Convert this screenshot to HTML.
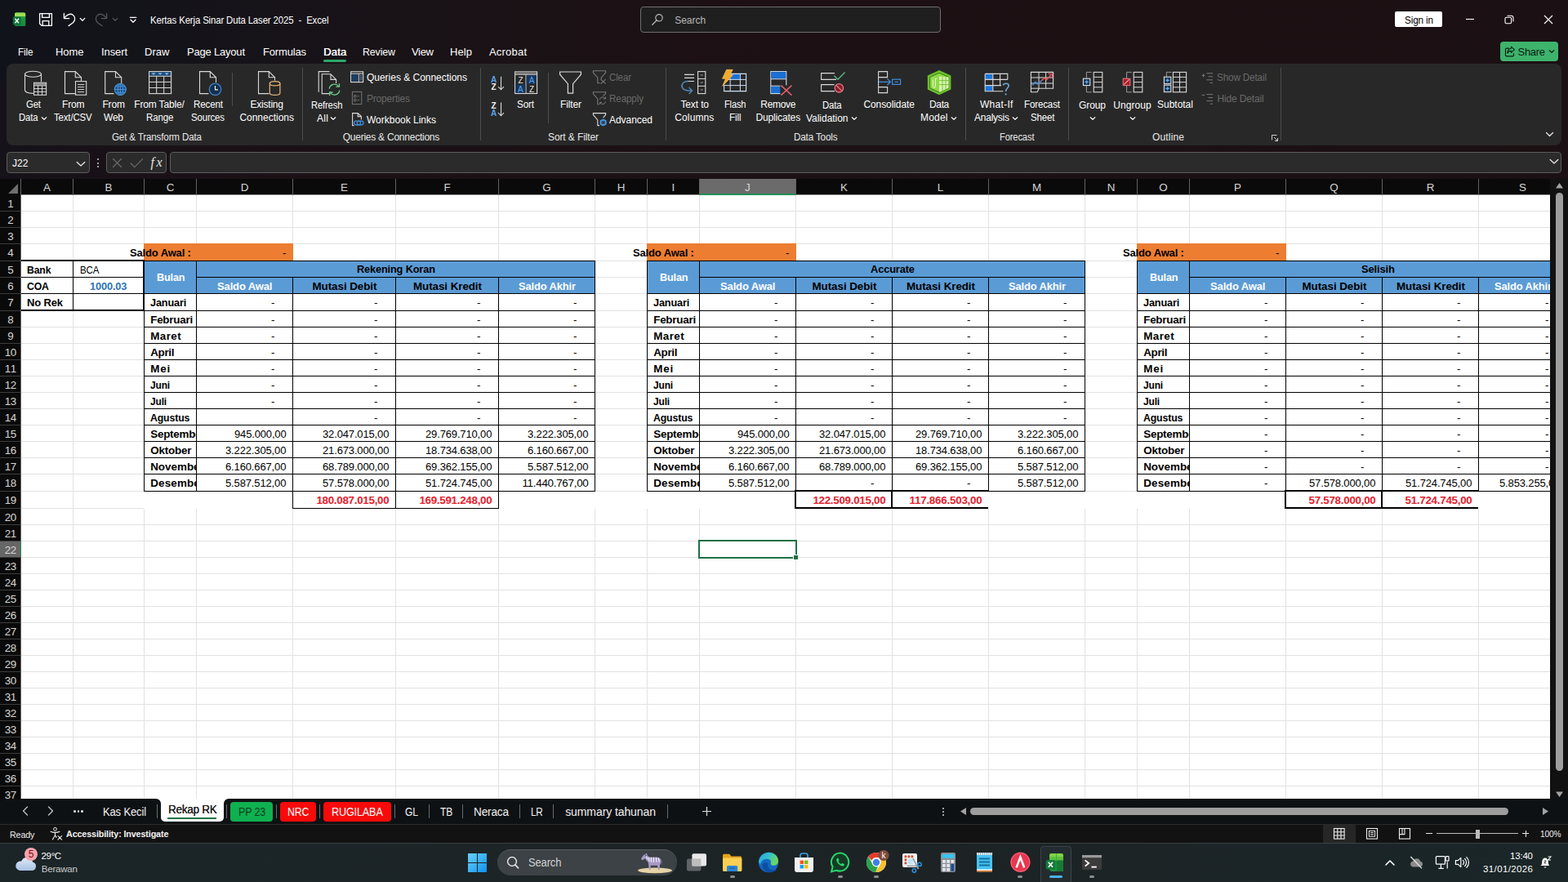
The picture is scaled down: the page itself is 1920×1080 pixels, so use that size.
<!DOCTYPE html>
<html lang="id"><head><meta charset="utf-8"><title>Kertas Kerja Sinar Duta Laser 2025 - Excel</title>
<style>
*{box-sizing:border-box;margin:0;padding:0}
html,body{width:1920px;height:1080px;overflow:hidden}
body{position:relative;font-family:"Liberation Sans",sans-serif;background:#1b1114;color:#fff}
div,span,svg{position:absolute}
.t{white-space:pre}
</style></head>
<body>
<div style="left:0px;top:0px;width:1920px;height:219px;background:#1b1115;"></div>
<div style="left:0px;top:0px;width:1920px;height:120px;background:linear-gradient(90deg,#11131a 0,#14131a 10%,#1a1216 30%,#1d1014 50%,#1b1013 100%);"></div>
<div style="left:0px;top:100px;width:1920px;height:119px;background:linear-gradient(90deg,#151219 0,#1a1116 12%,#1c1115 40%,#1b1013 100%);"></div>
<svg style="left:15px;top:15px;" width="18" height="18" viewBox="0 0 18 18" fill="none">
<defs><linearGradient id="xg" x1="0" y1="0" x2="0" y2="1"><stop offset="0" stop-color="#35b04a"/><stop offset="1" stop-color="#15803c"/></linearGradient></defs>
<rect x="3" y="0.6" width="13.2" height="16.4" rx="1.6" fill="url(#xg)"/>
<path d="M3 2.2a1.6 1.6 0 0 1 1.6-1.6h10a1.6 1.6 0 0 1 1.6 1.6v3H3z" fill="#9bdc55"/>
<rect x="9.6" y="5.2" width="6.6" height="11.8" fill="#1a8f3c" opacity="0.55"/>
<rect x="0.8" y="5.4" width="9.8" height="10.2" rx="1.4" fill="#0f6e3a"/>
<path d="M3.4 7.8L8 13.2M8 7.8L3.4 13.2" stroke="#e9fff0" stroke-width="1.5"/></svg>
<svg style="left:47px;top:15px;" width="18" height="18" viewBox="0 0 18 18" fill="none"><path d="M1.6 1.6H16.4V16.4H4L1.6 14Z" stroke="#fff" stroke-width="1.3" stroke-linejoin="round"/>
<path d="M4.6 1.6V6.4H13.4V1.6M5.2 16.4V10.6H12.8V16.4" stroke="#fff" stroke-width="1.3"/></svg>
<svg style="left:77px;top:15px;" width="17" height="18" viewBox="0 0 17 18" fill="none"><path d="M1.4 1.4v6.2h6.4" stroke="#fff" stroke-width="1.3" stroke-linecap="round" stroke-linejoin="round"/>
<path d="M1.8 7.2C4.4 3.4 8.8 0.8 12.2 3.2c3.4 2.4 3 7 .2 9.6L7 16.6" stroke="#fff" stroke-width="1.3" stroke-linecap="round"/></svg>
<svg style="left:97px;top:20px;" width="8" height="7" viewBox="0 0 8 7" fill="none"><path d="M1.2 2.4l2.8 2.8 2.8-2.8" stroke="#fff" stroke-width="1.3" stroke-linecap="round" stroke-linejoin="round"/></svg>
<svg style="left:115px;top:15px;" width="17" height="18" viewBox="0 0 17 18" fill="none"><path d="M15.6 1.4v6.2h-6.4" stroke="#555" stroke-width="1.3" stroke-linecap="round" stroke-linejoin="round"/>
<path d="M15.2 7.2C12.600 3.400 8.200 0.800 4.800 3.200c-3.400 2.400-3 7-.2 9.600l5.400 3.800" stroke="#555" stroke-width="1.3" stroke-linecap="round"/></svg>
<svg style="left:136.5px;top:20px;" width="8" height="7" viewBox="0 0 8 7" fill="none"><path d="M1.2 2.4l2.8 2.8 2.8-2.8" stroke="#555" stroke-width="1.3" stroke-linecap="round" stroke-linejoin="round"/></svg>
<svg style="left:157.6px;top:19px;" width="10" height="10" viewBox="0 0 10 10" fill="none"><path d="M1.2 2.300h7.600" stroke="#fff" stroke-width="1.2" stroke-linecap="round"/><path d="M2 5.200l3 3 3-3" stroke="#fff" stroke-width="1.3" stroke-linecap="round" stroke-linejoin="round"/></svg>
<span class="t" style="left:183.6px;top:15px;line-height:20px;font-size:12px;color:#ffffff;letter-spacing:-0.15px;transform:scaleX(0.9513);transform-origin:0 0;">Kertas Kerja Sinar Duta Laser 2025  -  Excel</span>
<div style="left:784px;top:8px;width:368px;height:32px;background:#1f1f1f;border:1px solid #6e6e6e;border-radius:4px;"></div>
<svg style="left:797px;top:16px;" width="16" height="16" viewBox="0 0 16 16" fill="none"><circle cx="10" cy="5.8" r="4.2" stroke="#b8b8b8" stroke-width="1.2"/><path d="M6.900 9L1.800 14.200" stroke="#b8b8b8" stroke-width="1.3" stroke-linecap="round"/></svg>
<span class="t" style="left:826.2px;top:15px;line-height:20px;font-size:12px;color:#b9b9b9;">Search</span>
<div style="left:1708px;top:14px;width:58px;height:19px;background:#fff;border-radius:2px;"></div>
<span class="t" style="left:1719.6px;top:15px;line-height:20px;font-size:12px;color:#000;letter-spacing:-0.15px;transform:scaleX(0.9779);transform-origin:0 0;">Sign in</span>
<svg style="left:1794px;top:18px;" width="12" height="12" viewBox="0 0 12 12" fill="none"><path d="M1 5.5h10" stroke="#fff" stroke-width="1.1"/></svg>
<svg style="left:1842px;top:18px;" width="12" height="12" viewBox="0 0 12 12" fill="none"><rect x="1" y="3.2" width="7.6" height="7.6" rx="1.6" stroke="#fff" stroke-width="1.1"/><path d="M3.6 1.2h4.6a2.8 2.8 0 0 1 2.8 2.8v4.4" stroke="#fff" stroke-width="1.1"/></svg>
<svg style="left:1890px;top:18px;" width="12" height="12" viewBox="0 0 12 12" fill="none"><path d="M1 1l10 10M11 1L1 11" stroke="#fff" stroke-width="1.1"/></svg>
<span class="t" style="left:22.0px;top:54px;line-height:20px;font-size:13px;color:#ffffff;letter-spacing:-0.15px;transform:scaleX(0.9019);transform-origin:0 0;">File</span>
<span class="t" style="left:68.0px;top:54px;line-height:20px;font-size:13px;color:#ffffff;letter-spacing:-0.06px;">Home</span>
<span class="t" style="left:124.0px;top:54px;line-height:20px;font-size:13px;color:#ffffff;letter-spacing:-0.1px;">Insert</span>
<span class="t" style="left:177.0px;top:54px;line-height:20px;font-size:13px;color:#ffffff;letter-spacing:0.04px;">Draw</span>
<span class="t" style="left:229.0px;top:54px;line-height:20px;font-size:13px;color:#ffffff;letter-spacing:-0.2px;">Page Layout</span>
<span class="t" style="left:322.0px;top:54px;line-height:20px;font-size:13px;color:#ffffff;letter-spacing:-0.17px;">Formulas</span>
<span class="t" style="left:396.0px;top:54px;line-height:20px;font-size:13px;color:#ffffff;letter-spacing:0.18px;text-shadow:0.4px 0 0 #fff;">Data</span>
<span class="t" style="left:444.0px;top:54px;line-height:20px;font-size:13px;color:#ffffff;letter-spacing:-0.15px;transform:scaleX(0.9541);transform-origin:0 0;">Review</span>
<span class="t" style="left:504.0px;top:54px;line-height:20px;font-size:13px;color:#ffffff;letter-spacing:-0.33px;">View</span>
<span class="t" style="left:551.0px;top:54px;line-height:20px;font-size:13px;color:#ffffff;letter-spacing:0.08px;">Help</span>
<span class="t" style="left:599.0px;top:54px;line-height:20px;font-size:13px;color:#ffffff;letter-spacing:0.2px;">Acrobat</span>
<div style="left:396px;top:73px;width:28px;height:2.5px;background:#2ea76a;border-radius:1.5px;"></div>
<div style="left:1837px;top:51px;width:71px;height:24px;background:#3db36c;border-radius:4px;"></div>
<svg style="left:1841.5px;top:56px;" width="14" height="14" viewBox="0 0 14 14" fill="none"><path d="M5.4 3.2H2.8a1.3 1.3 0 0 0-1.3 1.3v7a1.3 1.3 0 0 0 1.3 1.3h7.4a1.3 1.3 0 0 0 1.3-1.3v-2" stroke="#0b1f12" stroke-width="1.2" stroke-linecap="round"/><path d="M8.4 1.2l4 3.6-4 3.6V6.4C6 6.4 4.6 7.4 3.8 9.2 4 6 5.6 3.6 8.4 3.2z" stroke="#0b1f12" stroke-width="1.1" stroke-linejoin="round"/></svg>
<span class="t" style="left:1858.5px;top:54px;line-height:20px;font-size:13px;color:#0b1f12;letter-spacing:-0.29px;">Share</span>
<svg style="left:1896px;top:60px;" width="8" height="6" viewBox="0 0 8 6" fill="none"><path d="M1.3 1.8l2.7 2.6 2.7-2.6" stroke="#0b1f12" stroke-width="1.25" stroke-linecap="round" stroke-linejoin="round"/></svg>
<div style="left:8px;top:78px;width:1904px;height:100px;background:#282828;border-radius:8px;"></div>
<div style="left:370px;top:83px;width:1px;height:89px;background:#4d4d4d;"></div>
<div style="left:588px;top:83px;width:1px;height:89px;background:#4d4d4d;"></div>
<div style="left:815px;top:83px;width:1px;height:89px;background:#4d4d4d;"></div>
<div style="left:1182px;top:83px;width:1px;height:89px;background:#4d4d4d;"></div>
<div style="left:1308px;top:83px;width:1px;height:89px;background:#4d4d4d;"></div>
<div style="left:1568px;top:83px;width:1px;height:89px;background:#4d4d4d;"></div>
<span class="t" style="left:136.5px;top:158px;line-height:20px;font-size:12px;color:#e8e8e8;letter-spacing:-0.15px;transform:scaleX(0.9659);transform-origin:0 0;">Get &amp; Transform Data</span>
<span class="t" style="left:419.7px;top:158px;line-height:20px;font-size:12px;color:#e8e8e8;letter-spacing:-0.24px;">Queries &amp; Connections</span>
<span class="t" style="left:671.0px;top:158px;line-height:20px;font-size:12px;color:#e8e8e8;letter-spacing:-0.11px;">Sort &amp; Filter</span>
<span class="t" style="left:972.2px;top:158px;line-height:20px;font-size:12px;color:#e8e8e8;letter-spacing:-0.15px;transform:scaleX(0.9703);transform-origin:0 0;">Data Tools</span>
<span class="t" style="left:1224.3px;top:158px;line-height:20px;font-size:12px;color:#e8e8e8;letter-spacing:-0.15px;transform:scaleX(0.9314);transform-origin:0 0;">Forecast</span>
<span class="t" style="left:1411.0px;top:158px;line-height:20px;font-size:12px;color:#e8e8e8;letter-spacing:0.17px;">Outline</span>
<span class="t" style="left:32.2px;top:118px;line-height:20px;font-size:12px;color:#ffffff;letter-spacing:-0.15px;transform:scaleX(0.9449);transform-origin:0 0;">Get</span>
<span class="t" style="left:23.4px;top:134px;line-height:20px;font-size:12px;color:#ffffff;letter-spacing:-0.15px;transform:scaleX(0.9438);transform-origin:0 0;">Data</span>
<svg style="left:50px;top:141.5px;" width="8" height="6" viewBox="0 0 8 6" fill="none"><path d="M1.3 1.8l2.7 2.6 2.7-2.6" stroke="#ffffff" stroke-width="1.25" stroke-linecap="round" stroke-linejoin="round"/></svg>
<span class="t" style="left:76.0px;top:118px;line-height:20px;font-size:12px;color:#ffffff;letter-spacing:-0.16px;">From</span>
<span class="t" style="left:66.3px;top:134px;line-height:20px;font-size:12px;color:#ffffff;letter-spacing:-0.15px;transform:scaleX(0.9518);transform-origin:0 0;">Text/CSV</span>
<span class="t" style="left:125.4px;top:118px;line-height:20px;font-size:12px;color:#ffffff;letter-spacing:-0.16px;">From</span>
<span class="t" style="left:127.0px;top:134px;line-height:20px;font-size:12px;color:#ffffff;letter-spacing:-0.22px;">Web</span>
<span class="t" style="left:164.3px;top:118px;line-height:20px;font-size:12px;color:#ffffff;letter-spacing:-0.17px;">From Table/</span>
<span class="t" style="left:179.0px;top:134px;line-height:20px;font-size:12px;color:#ffffff;letter-spacing:-0.15px;transform:scaleX(0.9606);transform-origin:0 0;">Range</span>
<span class="t" style="left:237.0px;top:118px;line-height:20px;font-size:12px;color:#ffffff;letter-spacing:-0.15px;transform:scaleX(0.9662);transform-origin:0 0;">Recent</span>
<span class="t" style="left:234.0px;top:134px;line-height:20px;font-size:12px;color:#ffffff;letter-spacing:-0.15px;transform:scaleX(0.9511);transform-origin:0 0;">Sources</span>
<div style="left:284px;top:89px;width:1px;height:41px;background:#4d4d4d;"></div>
<span class="t" style="left:306.5px;top:118px;line-height:20px;font-size:12px;color:#ffffff;letter-spacing:-0.22px;">Existing</span>
<span class="t" style="left:293.4px;top:134px;line-height:20px;font-size:12px;color:#ffffff;letter-spacing:-0.01px;">Connections</span>
<span class="t" style="left:381.0px;top:119px;line-height:20px;font-size:12px;color:#ffffff;letter-spacing:-0.15px;transform:scaleX(0.9336);transform-origin:0 0;">Refresh</span>
<span class="t" style="left:388.0px;top:135px;line-height:20px;font-size:12px;color:#ffffff;letter-spacing:0.33px;">All</span>
<svg style="left:404px;top:142.3px;" width="8" height="6" viewBox="0 0 8 6" fill="none"><path d="M1.3 1.8l2.7 2.6 2.7-2.6" stroke="#ffffff" stroke-width="1.25" stroke-linecap="round" stroke-linejoin="round"/></svg>
<span class="t" style="left:449.0px;top:85px;line-height:20px;font-size:12px;color:#ffffff;letter-spacing:-0.02px;">Queries &amp; Connections</span>
<span class="t" style="left:449.0px;top:111px;line-height:20px;font-size:12px;color:#6a6a6a;letter-spacing:-0.19px;">Properties</span>
<span class="t" style="left:449.0px;top:137px;line-height:20px;font-size:12px;color:#ffffff;letter-spacing:-0.01px;">Workbook Links</span>
<span class="t" style="left:633.0px;top:118px;line-height:20px;font-size:12px;color:#ffffff;letter-spacing:-0.15px;transform:scaleX(0.9736);transform-origin:0 0;">Sort</span>
<div style="left:671px;top:89px;width:1px;height:62px;background:#4d4d4d;"></div>
<span class="t" style="left:686.0px;top:118px;line-height:20px;font-size:12px;color:#ffffff;letter-spacing:-0.13px;">Filter</span>
<span class="t" style="left:746.0px;top:85px;line-height:20px;font-size:12px;color:#6a6a6a;letter-spacing:-0.15px;transform:scaleX(0.9615);transform-origin:0 0;">Clear</span>
<span class="t" style="left:746.0px;top:111px;line-height:20px;font-size:12px;color:#6a6a6a;letter-spacing:-0.15px;transform:scaleX(0.9736);transform-origin:0 0;">Reapply</span>
<span class="t" style="left:746.0px;top:137px;line-height:20px;font-size:12px;color:#ffffff;letter-spacing:-0.05px;">Advanced</span>
<span class="t" style="left:833.4px;top:118px;line-height:20px;font-size:12px;color:#ffffff;letter-spacing:-0.12px;">Text to</span>
<span class="t" style="left:826.3px;top:134px;line-height:20px;font-size:12px;color:#ffffff;letter-spacing:0.11px;">Columns</span>
<span class="t" style="left:886.6px;top:118px;line-height:20px;font-size:12px;color:#ffffff;letter-spacing:-0.15px;transform:scaleX(0.9186);transform-origin:0 0;">Flash</span>
<span class="t" style="left:892.5px;top:134px;line-height:20px;font-size:12px;color:#ffffff;letter-spacing:-0.15px;transform:scaleX(0.9745);transform-origin:0 0;">Fill</span>
<span class="t" style="left:931.3px;top:118px;line-height:20px;font-size:12px;color:#ffffff;letter-spacing:-0.33px;">Remove</span>
<span class="t" style="left:925.4px;top:134px;line-height:20px;font-size:12px;color:#ffffff;letter-spacing:-0.14px;">Duplicates</span>
<span class="t" style="left:1007.4px;top:119px;line-height:20px;font-size:12px;color:#ffffff;letter-spacing:-0.15px;transform:scaleX(0.9518);transform-origin:0 0;">Data</span>
<span class="t" style="left:987.0px;top:135px;line-height:20px;font-size:12px;color:#ffffff;letter-spacing:-0.03px;">Validation</span>
<svg style="left:1041.5px;top:142.3px;" width="8" height="6" viewBox="0 0 8 6" fill="none"><path d="M1.3 1.8l2.7 2.6 2.7-2.6" stroke="#ffffff" stroke-width="1.25" stroke-linecap="round" stroke-linejoin="round"/></svg>
<span class="t" style="left:1057.4px;top:118px;line-height:20px;font-size:12px;color:#ffffff;letter-spacing:-0.08px;">Consolidate</span>
<span class="t" style="left:1138.0px;top:118px;line-height:20px;font-size:12px;color:#ffffff;letter-spacing:-0.35px;">Data</span>
<span class="t" style="left:1127.0px;top:134px;line-height:20px;font-size:12px;color:#ffffff;letter-spacing:0.21px;">Model</span>
<svg style="left:1163.5px;top:141.5px;" width="8" height="6" viewBox="0 0 8 6" fill="none"><path d="M1.3 1.8l2.7 2.6 2.7-2.6" stroke="#ffffff" stroke-width="1.25" stroke-linecap="round" stroke-linejoin="round"/></svg>
<span class="t" style="left:1200.0px;top:118px;line-height:20px;font-size:12px;color:#ffffff;letter-spacing:0.28px;">What-If</span>
<span class="t" style="left:1193.0px;top:134px;line-height:20px;font-size:12px;color:#ffffff;letter-spacing:-0.24px;">Analysis</span>
<svg style="left:1238.5px;top:141.5px;" width="8" height="6" viewBox="0 0 8 6" fill="none"><path d="M1.3 1.8l2.7 2.6 2.7-2.6" stroke="#ffffff" stroke-width="1.25" stroke-linecap="round" stroke-linejoin="round"/></svg>
<span class="t" style="left:1254.4px;top:118px;line-height:20px;font-size:12px;color:#ffffff;letter-spacing:-0.15px;transform:scaleX(0.9643);transform-origin:0 0;">Forecast</span>
<span class="t" style="left:1262.1px;top:134px;line-height:20px;font-size:12px;color:#ffffff;letter-spacing:-0.15px;transform:scaleX(0.9593);transform-origin:0 0;">Sheet</span>
<span class="t" style="left:1321.0px;top:119px;line-height:20px;font-size:12px;color:#ffffff;letter-spacing:-0.09px;">Group</span>
<svg style="left:1333.5px;top:141.5px;" width="8" height="6" viewBox="0 0 8 6" fill="none"><path d="M1.3 1.8l2.7 2.6 2.7-2.6" stroke="#ffffff" stroke-width="1.25" stroke-linecap="round" stroke-linejoin="round"/></svg>
<span class="t" style="left:1363.2px;top:119px;line-height:20px;font-size:12px;color:#ffffff;letter-spacing:0.08px;">Ungroup</span>
<svg style="left:1382.7px;top:141.5px;" width="8" height="6" viewBox="0 0 8 6" fill="none"><path d="M1.3 1.8l2.7 2.6 2.7-2.6" stroke="#ffffff" stroke-width="1.25" stroke-linecap="round" stroke-linejoin="round"/></svg>
<span class="t" style="left:1417.1px;top:118px;line-height:20px;font-size:12px;color:#ffffff;letter-spacing:-0.03px;">Subtotal</span>
<span class="t" style="left:1490.4px;top:85px;line-height:20px;font-size:12px;color:#6a6a6a;letter-spacing:-0.15px;transform:scaleX(0.9757);transform-origin:0 0;">Show Detail</span>
<span class="t" style="left:1490.4px;top:111px;line-height:20px;font-size:12px;color:#6a6a6a;letter-spacing:-0.14px;">Hide Detail</span>
<svg style="left:1556px;top:164px;" width="10" height="9" viewBox="0 0 10 9" fill="none"><path d="M1.5 7.5V1.5h6" stroke="#cfcfcf" stroke-width="1"/><path d="M4 4l4.5 4.5M8.5 5v3.5H5" stroke="#cfcfcf" stroke-width="1"/></svg>
<svg style="left:1892px;top:160.5px;" width="11" height="8" viewBox="0 0 11 8" fill="none"><path d="M1.5 1.5l4 4 4-4" stroke="#e0e0e0" stroke-width="1.4" stroke-linecap="round" stroke-linejoin="round"/></svg>
<svg style="left:0;top:78px" width="1920" height="100" viewBox="0 78 1920 100" fill="none"><ellipse cx="40.5" cy="90.8" rx="10" ry="3.5" stroke="#dadada" stroke-width="1.1" fill="none"/><path d="M30.5 90.8V110.6C30.5 112.6 34.5 114.3 40.8 114.4M50.5 90.8V100.6" stroke="#dadada" stroke-width="1.1" fill="none" /><rect x="41.6" y="101.3" width="15" height="15" stroke="#dadada" stroke-width="1.1" fill="#282828"/><rect x="42.2" y="101.9" width="13.8" height="2.4" stroke="none" stroke-width="1.1" fill="#8a8a8a"/><path d="M41.6 104.8H56.6M41.6 108.6H56.6M41.6 112.4H56.6M46.6 104.8V116.3M51.6 104.8V116.3" stroke="#dadada" stroke-width="1" fill="none" /><path d="M92 114.6H79.5V87.6H92.3L99.5 94.8V99.5" stroke="#dadada" stroke-width="1.1" fill="none" /><path d="M92.3 87.6V94.8H99.5" stroke="#dadada" stroke-width="1.1" fill="none" /><rect x="92.5" y="99.6" width="13.2" height="16.6" stroke="#dadada" stroke-width="1.1" fill="#282828"/><path d="M95 103.6H103.2M95 106.6H103.2M95 109.6H103.2M95 112.6H103.2" stroke="#dadada" stroke-width="1" fill="none" /><path d="M139.5 114.6H128.7V87.6H141.5L148.7 94.8V102" stroke="#dadada" stroke-width="1.1" fill="none" /><path d="M141.5 87.6V94.8H148.7" stroke="#dadada" stroke-width="1.1" fill="none" /><circle cx="147.3" cy="109.5" r="7" stroke="#4f9be0" stroke-width="1.1" fill="#1a4f86"/><ellipse cx="147.3" cy="109.5" rx="3.2" ry="7" stroke="#4f9be0" stroke-width="0.9" fill="none"/><path d="M140.3 109.5H154.3M141.4 105.8H153.2M141.4 113.2H153.2M147.3 102.5V116.5" stroke="#4f9be0" stroke-width="0.9" fill="none" /><rect x="182.6" y="87.6" width="27" height="27" stroke="#dadada" stroke-width="1.1" fill="none"/><rect x="183.2" y="88.2" width="25.8" height="4.6" stroke="none" stroke-width="1.1" fill="#1f4e79"/><path d="M185.5 89.3h5l-2.5 2.6zM193.6 89.3h5l-2.5 2.6zM201.7 89.3h5l-2.5 2.6z" stroke="none" stroke-width="1.1" fill="#7fb4e6" /><path d="M182.6 93.3H209.6M182.6 100.4H209.6M182.6 107.5H209.6M191.7 93.3V114.6M200.7 93.3V114.6" stroke="#dadada" stroke-width="1" fill="none" /><path d="M255.5 114.6H244.5V87.6H257.3L264.5 94.8V101" stroke="#dadada" stroke-width="1.1" fill="none" /><path d="M257.3 87.6V94.8H264.5" stroke="#dadada" stroke-width="1.1" fill="none" /><circle cx="263.5" cy="109.3" r="7.2" stroke="#3f7fbf" stroke-width="1.4" fill="#14304f"/><path d="M263.5 105V109.8H267" stroke="#f0f0f0" stroke-width="1.2" fill="none" /><path d="M329.5 114.6H316.5V87.6H329.3L336.5 94.8V98.5" stroke="#dadada" stroke-width="1.1" fill="none" /><path d="M329.3 87.6V94.8H336.5" stroke="#dadada" stroke-width="1.1" fill="none" /><path d="M330.3 102.2V113.8C330.3 115.4 333.2 116.4 336.6 116.4C340 116.4 342.9 115.4 342.9 113.8V102.2" stroke="#e8b878" stroke-width="1.2" fill="#282828" /><ellipse cx="336.6" cy="102.2" rx="6.3" ry="2.6" stroke="#e8b878" stroke-width="1.2" fill="#282828"/><path d="M403.5 87.6H390.2V112.8" stroke="#dadada" stroke-width="1.1" fill="none" /><path d="M404.5 114.6H394.2V90.8H405L411.6 97.4V102M405 90.8V97.4H411.6" stroke="#dadada" stroke-width="1.1" fill="none" /><circle cx="409.5" cy="109.6" r="7.6" stroke="none" stroke-width="1.1" fill="#282828"/><path d="M403.2 108.6A6.4 6.4 0 0 1 414.6 105.6M415.8 110.6A6.4 6.4 0 0 1 404.4 113.6" stroke="#6fcf8f" stroke-width="1.3" fill="none" /><path d="M415.4 102.2V106.2H411.4M403.6 117V113H407.6" stroke="#6fcf8f" stroke-width="1.3" fill="none" /><rect x="429.6" y="87.8" width="15" height="12.8" stroke="#dadada" stroke-width="1.1" fill="none"/><path d="M429.6 90.2H444.6M439.3 90.2V100.6" stroke="#dadada" stroke-width="1" fill="none" /><rect x="430.4" y="91" width="8.2" height="9" stroke="none" stroke-width="1.1" fill="#1c3d63"/><path d="M441 93H443M441 95.4H443M441 97.8H443" stroke="#7fb4e6" stroke-width="1" fill="none" /><rect x="431.4" y="112.4" width="11.4" height="15.2" stroke="#757575" stroke-width="1" fill="none"/><path d="M433.6 116.6h2.4v2.4h-2.4zM433.6 121.4h2.4v2.4h-2.4zM437.6 117.8H440M437.6 122.6H440" stroke="#757575" stroke-width="0.9" fill="none" /><path d="M442.4 146.5V142.6L438.2 138.6H431.6V153.6H433.5M438.2 138.6V142.6H442.4" stroke="#dadada" stroke-width="1.1" fill="none" /><path d="M436 148.2h3a2.4 2.4 0 0 1 0 4.8h-3a2.4 2.4 0 0 1 0-4.8zM439.6 148.2h3a2.4 2.4 0 0 1 0 4.8h-3a2.4 2.4 0 0 1 0-4.8z" stroke="#3f8ede" stroke-width="1.3" fill="none" /><path d="M613.5 93.8V109.8M610.1 106.2L613.5 109.8L616.9 106.2" stroke="#dadada" stroke-width="1.1" fill="none" /><path d="M613.5 125.6V141.8M610.1 138.20000000000002L613.5 141.8L616.9 138.20000000000002" stroke="#dadada" stroke-width="1.1" fill="none" /><rect x="630.6" y="87.9" width="27" height="26.6" stroke="#dadada" stroke-width="1.1" fill="none"/><rect x="631.2" y="88.5" width="25.8" height="2.2" stroke="none" stroke-width="1.1" fill="#777"/><path d="M630.6 91.2H657.6M644 91.2V114.5" stroke="#dadada" stroke-width="1" fill="none" /><rect x="631.3" y="103.2" width="12" height="10.8" stroke="none" stroke-width="1.1" fill="#17375e"/><rect x="644.7" y="92" width="12.3" height="10.8" stroke="none" stroke-width="1.1" fill="#17375e"/><path d="M685.6 88H711.4V91.2L701.6 102.6V114.2H695.4V102.6L685.6 91.2Z" stroke="#dadada" stroke-width="1.2" fill="none" /><path d="M736.2 97V95.2L741.6 88.8V86.8H726.4V88.8L731.8 95.2V101.8H734.6" stroke="#7a7a7a" stroke-width="1.1" fill="none" /><path d="M735.6 97.2L741.6 102.6M741.6 97.2L735.6 102.6" stroke="#7a7a7a" stroke-width="1.1" fill="none" /><path d="M738.4 117.4L741.6 114.8V112.8H726.4V114.8L731.8 121.2V127.8H733.6" stroke="#7a7a7a" stroke-width="1.1" fill="none" /><path d="M734.4 122A3.6 3.6 0 0 1 741 120.6M741.6 124.4A3.6 3.6 0 0 1 735 125.8M741.4 118.6V121H739M734.6 127.8V125.4H737" stroke="#7a7a7a" stroke-width="1" fill="none" /><path d="M738.6 144.2L741.6 140.6V138.6H726.4V140.6L731.8 147V153.6H734" stroke="#dadada" stroke-width="1.1" fill="none" /><circle cx="738.6" cy="150" r="3.3" stroke="#4a9be8" stroke-width="1.6" fill="#282828"/><path d="M738.6 145.6V154.4M734.8 147.8L742.4 152.2M734.8 152.2L742.4 147.8" stroke="#4a9be8" stroke-width="1" fill="none" /><circle cx="738.6" cy="150" r="1.2" stroke="none" stroke-width="1.1" fill="#282828"/><path d="M838 91.4H850M838 95.4H850M841.4 99.5H850" stroke="#dadada" stroke-width="1.1" fill="none" /><path d="M842.4 99.6C836 99.8 833 104.6 836.2 108.4C838.4 110.8 842 111 846.8 111M843.6 107L847.6 111L843.6 115" stroke="#4e88bd" stroke-width="1.5" fill="none" /><rect x="854.6" y="87.6" width="9.2" height="27" stroke="#dadada" stroke-width="1.1" fill="none"/><path d="M854.6 96.4H863.8M854.6 105.4H863.8" stroke="#dadada" stroke-width="1" fill="none" /><path d="M857.6 92H861M857.6 101H861M857.6 110H861" stroke="#999" stroke-width="1" fill="none" /><rect x="894.2" y="90.4" width="12" height="7" stroke="none" stroke-width="1.1" fill="#1a6fd4"/><path d="M893.4 90.4H913.6V111.6H886.6V104.4" stroke="#cfe0f2" stroke-width="1.1" fill="none" /><path d="M890 97.4H913.6M886.6 104.6H913.6M894.2 96V111.6M906.4 90.4V111.6" stroke="#cfe0f2" stroke-width="1" fill="none" /><path d="M889.6 85.4H897.2L893.6 91.8H897.4L884.8 105.4L888.6 96.2H884.6Z" stroke="#f7c65a" stroke-width="0.8" fill="#f0a92a" /><rect x="943.8" y="87.6" width="19" height="27" stroke="#cfe0f2" stroke-width="1.1" fill="none"/><rect x="944.4" y="88.2" width="17.8" height="8" stroke="none" stroke-width="1.1" fill="#1a6fd4"/><rect x="944.4" y="105.8" width="11.4" height="8.2" stroke="none" stroke-width="1.1" fill="#1a6fd4"/><path d="M943.8 96.8H962.8M943.8 105.2H956" stroke="#cfe0f2" stroke-width="1" fill="none" /><rect x="955.4" y="104.4" width="9" height="11.4" stroke="none" stroke-width="1.1" fill="#282828"/><path d="M956.4 104.6L969.4 116.6M969.4 104.6L956.4 116.6" stroke="#e0606a" stroke-width="1.5" fill="none" /><path d="M1022 89.6H1005.6V97.4H1024" stroke="#dadada" stroke-width="1.1" fill="none" /><path d="M1021.4 92.8L1026 97.2L1034.6 88.4" stroke="#58b884" stroke-width="1.4" fill="none" /><path d="M1021.6 103.6H1005.6V111.6H1022" stroke="#dadada" stroke-width="1.1" fill="none" /><circle cx="1027.4" cy="107.8" r="5.2" stroke="#e07a86" stroke-width="1.3" fill="#8a1c2a"/><path d="M1023.8 104.2L1031 111.4" stroke="#e07a86" stroke-width="1.3" fill="none" /><path d="M1075.6 87.6H1086.6V94.6H1075.6V87.6M1075.6 94.6V106.6M1075.6 106.6H1086.6V113.6H1075.6Z" stroke="#dadada" stroke-width="1.1" fill="none" /><path d="M1076 100.3H1090M1086.4 96.4L1090.4 100.3L1086.4 104.2" stroke="#3f8ede" stroke-width="1.3" fill="none" /><rect x="1092.6" y="97.2" width="10" height="6.2" stroke="#3f8ede" stroke-width="1.2" fill="none"/><path d="M1095.4 100.3H1099.8" stroke="#3f8ede" stroke-width="1.1" fill="none" /><path d="M1150 86L1164.4 92.4V109.6L1150 116.2L1135.8 109.6V92.4Z" stroke="none" stroke-width="1.1" fill="#6cbf2c" /><path d="M1150 89.4L1161.6 94.4V107.8L1150 113L1138.6 107.8V94.4Z" stroke="#2f6b10" stroke-width="0.8" fill="#8fd945" /><path d="M1150 93.6L1161.6 94.4V107.8L1150 113Z" stroke="none" stroke-width="1.1" fill="#d8f2b0" /><path d="M1150 98.6H1161.6M1150 103.6H1161.6M1154 94V111M1158 94.2V109.4" stroke="#6cbf2c" stroke-width="0.9" fill="none" /><path d="M1142.4 97.6V106.8M1142.4 95.6V96.2M1147.4 96.2H1145.4V105.4C1145.4 107.2 1144.2 107.6 1143 107.4" stroke="#e6f7cc" stroke-width="1.1" fill="none" /><rect x="1206.4" y="90.6" width="9" height="6.4" stroke="none" stroke-width="1.1" fill="#1a76dc"/><rect x="1206.4" y="105" width="9" height="6.4" stroke="none" stroke-width="1.1" fill="#1a76dc"/><path d="M1206.2 90.4H1233.8V97.2M1206.2 90.4V111.8H1228.4M1206.2 97.4H1233.8M1206.2 104.6H1226M1215.8 90.4V111.8M1224.6 90.4V104" stroke="#d9d9d9" stroke-width="1.1" fill="none" /><path d="M1228.4 104.6C1228.6 101.6 1235 101.2 1235.2 104.8C1235.2 107.6 1231.6 108 1231.6 112" stroke="#6ea5d8" stroke-width="1.6" fill="none" /><circle cx="1231.6" cy="115.4" r="1.1" stroke="none" stroke-width="1.1" fill="#6ea5d8"/><path d="M1262.4 88.4H1289.6V108.2H1272.4L1270 112.8H1262.4Z" stroke="#dadada" stroke-width="1.1" fill="none" /><path d="M1262.4 95H1289.6M1262.4 102H1289.6M1262.4 108.2H1272.4M1272 88.4V108.2M1280.6 88.4V108.2" stroke="#dadada" stroke-width="1" fill="none" /><path d="M1264 104.4L1267.8 100.4L1271 103.2L1275.4 98.6" stroke="#4a8fd6" stroke-width="1.5" fill="none" /><path d="M1275.4 98.6L1279 95.4L1281.6 97.6L1287 91.6" stroke="#e8505e" stroke-width="1.5" fill="none" /><path d="M1283.4 90.4H1288.2V95.2" stroke="#e8505e" stroke-width="1.4" fill="none" /><path d="M1336.6 88.4H1330.4V112.8H1336.6" stroke="#9a9a9a" stroke-width="1" fill="none" /><rect x="1326.4" y="96.2" width="8.4" height="8.4" stroke="#e0e0e0" stroke-width="1.1" fill="#18385c"/><path d="M1330.6 98.2V102.6M1328.4 100.4H1332.8" stroke="#6fb0ee" stroke-width="1.1" fill="none" /><rect x="1339.2" y="88.4" width="10.6" height="24.4" stroke="#dadada" stroke-width="1.1" fill="none"/><path d="M1339.2 94.4H1349.8M1339.2 100.6H1349.8M1339.2 106.8H1349.8" stroke="#dadada" stroke-width="1" fill="none" /><path d="M1385.8 88.4H1379.6V112.8H1385.8" stroke="#9a9a9a" stroke-width="1" fill="none" /><rect x="1375.2" y="96.2" width="8.6" height="8.4" stroke="#e8707c" stroke-width="1.1" fill="#a81c2c"/><path d="M1376.4 103.4L1382.6 97.4" stroke="#f0b0b8" stroke-width="1.1" fill="none" /><rect x="1388.2" y="88.4" width="10.6" height="24.4" stroke="#dadada" stroke-width="1.1" fill="none"/><path d="M1388.2 94.4H1398.8M1388.2 100.6H1398.8M1388.2 106.8H1398.8" stroke="#dadada" stroke-width="1" fill="none" /><path d="M1434.4 88.4H1428.4V94" stroke="#9a9a9a" stroke-width="1" fill="none" /><rect x="1425.4" y="94.2" width="8.4" height="8.4" stroke="#e0e0e0" stroke-width="1.1" fill="#18385c"/><path d="M1429.6 96.2V100.6M1427.4 98.4H1431.8" stroke="#6fb0ee" stroke-width="1.1" fill="none" /><rect x="1425.4" y="104.2" width="8.4" height="8.4" stroke="#e0e0e0" stroke-width="1.1" fill="#18385c"/><path d="M1429.6 106.2V110.6M1427.4 108.4H1431.8" stroke="#6fb0ee" stroke-width="1.1" fill="none" /><rect x="1436.4" y="88.4" width="16.2" height="24.4" stroke="#dadada" stroke-width="1.1" fill="none"/><path d="M1436.4 94.4H1452.6M1436.4 100.6H1452.6M1436.4 106.8H1452.6M1444.5 88.4V112.8" stroke="#dadada" stroke-width="1" fill="none" /><path d="M1471.6 92.4H1475.6M1473.6 90.4V94.4M1477.4 89.8H1485M1479.6 93.8H1485M1477.4 97.8H1485M1481.6 101.4H1485" stroke="#7a7a7a" stroke-width="1" fill="none" /><path d="M1471.6 116.4H1475.2M1477.4 115.6H1485M1479.6 119.6H1485M1477.4 123.6H1485M1481.6 127.2H1485" stroke="#7a7a7a" stroke-width="1" fill="none" /></svg>
<span class="t" style="left:601.0px;top:88px;line-height:20px;font-size:10px;color:#5aa5ea;font-weight:700;">A</span>
<span class="t" style="left:601.6px;top:97px;line-height:20px;font-size:10px;color:#f0f0f0;font-weight:700;">Z</span>
<span class="t" style="left:601.6px;top:120px;line-height:20px;font-size:10px;color:#f0f0f0;font-weight:700;">Z</span>
<span class="t" style="left:601.0px;top:129px;line-height:20px;font-size:10px;color:#5aa5ea;font-weight:700;">A</span>
<span class="t" style="left:634.4px;top:89px;line-height:20px;font-size:10px;color:#e6e6e6;">Z</span>
<span class="t" style="left:634.1px;top:100px;line-height:20px;font-size:10px;color:#5aa5ea;">A</span>
<span class="t" style="left:647.7px;top:89px;line-height:20px;font-size:10px;color:#5aa5ea;">A</span>
<span class="t" style="left:648.0px;top:100px;line-height:20px;font-size:10px;color:#e6e6e6;">Z</span>
<div style="left:8px;top:186px;width:102px;height:26px;background:#2b2b2b;border:1px solid #5c5c5c;border-radius:4px;"></div>
<span class="t" style="left:15.0px;top:190px;line-height:20px;font-size:12px;color:#ffffff;letter-spacing:0.07px;">J22</span>
<svg style="left:93px;top:197px;" width="12" height="8" viewBox="0 0 12 8" fill="none"><path d="M1.2 1.5l4.8 4.4 4.8-4.4" stroke="#e0e0e0" stroke-width="1.4" stroke-linecap="round" stroke-linejoin="round"/></svg>
<div style="left:119px;top:194px;width:2px;height:2px;background:#cfcfcf;border-radius:1px;"></div>
<div style="left:119px;top:198.5px;width:2px;height:2px;background:#cfcfcf;border-radius:1px;"></div>
<div style="left:119px;top:203px;width:2px;height:2px;background:#cfcfcf;border-radius:1px;"></div>
<div style="left:130px;top:186px;width:74px;height:26px;background:#2b2b2b;border:1px solid #5c5c5c;border-radius:4px;"></div>
<svg style="left:137px;top:193px;" width="13" height="13" viewBox="0 0 13 13" fill="none"><path d="M1.5 1.5l10 10M11.5 1.5l-10 10" stroke="#6a6a6a" stroke-width="1.2" stroke-linecap="round"/></svg>
<svg style="left:159px;top:193px;" width="17" height="13" viewBox="0 0 17 13" fill="none"><path d="M1.2 7l4.6 4.6L15.6 1.6" stroke="#6a6a6a" stroke-width="1.2" stroke-linecap="round" stroke-linejoin="round"/></svg>
<span class="t" style="left:184.5px;top:189px;line-height:20px;font-size:16px;color:#e6e6e6;letter-spacing:2.44px;font-family:'Liberation Serif',serif;font-style:italic;">fx</span>
<div style="left:208px;top:186px;width:1704px;height:26px;background:#2b2b2b;border:1px solid #5c5c5c;border-radius:4px;"></div>
<svg style="left:1897px;top:194px;" width="12" height="8" viewBox="0 0 12 8" fill="none"><path d="M1.2 1.5l4.8 4.4 4.8-4.4" stroke="#e0e0e0" stroke-width="1.4" stroke-linecap="round" stroke-linejoin="round"/></svg>
<div id="sheet" style="left:0;top:219px;width:1898px;height:759px;background:#fff;overflow:hidden">
<div style="left:89px;top:20px;width:1px;height:739px;background:#e2e2e2;"></div>
<div style="left:176px;top:20px;width:1px;height:739px;background:#e2e2e2;"></div>
<div style="left:240px;top:20px;width:1px;height:739px;background:#e2e2e2;"></div>
<div style="left:358px;top:20px;width:1px;height:739px;background:#e2e2e2;"></div>
<div style="left:484px;top:20px;width:1px;height:739px;background:#e2e2e2;"></div>
<div style="left:610px;top:20px;width:1px;height:739px;background:#e2e2e2;"></div>
<div style="left:728px;top:20px;width:1px;height:739px;background:#e2e2e2;"></div>
<div style="left:792px;top:20px;width:1px;height:739px;background:#e2e2e2;"></div>
<div style="left:856px;top:20px;width:1px;height:739px;background:#e2e2e2;"></div>
<div style="left:974px;top:20px;width:1px;height:739px;background:#e2e2e2;"></div>
<div style="left:1092px;top:20px;width:1px;height:739px;background:#e2e2e2;"></div>
<div style="left:1210px;top:20px;width:1px;height:739px;background:#e2e2e2;"></div>
<div style="left:1328px;top:20px;width:1px;height:739px;background:#e2e2e2;"></div>
<div style="left:1392px;top:20px;width:1px;height:739px;background:#e2e2e2;"></div>
<div style="left:1456px;top:20px;width:1px;height:739px;background:#e2e2e2;"></div>
<div style="left:1574px;top:20px;width:1px;height:739px;background:#e2e2e2;"></div>
<div style="left:1692px;top:20px;width:1px;height:739px;background:#e2e2e2;"></div>
<div style="left:1810px;top:20px;width:1px;height:739px;background:#e2e2e2;"></div>
<div style="left:26px;top:39px;width:1872px;height:1px;background:#e2e2e2;"></div>
<div style="left:26px;top:59px;width:1872px;height:1px;background:#e2e2e2;"></div>
<div style="left:26px;top:79px;width:1872px;height:1px;background:#e2e2e2;"></div>
<div style="left:26px;top:100px;width:1872px;height:1px;background:#e2e2e2;"></div>
<div style="left:26px;top:120px;width:1872px;height:1px;background:#e2e2e2;"></div>
<div style="left:26px;top:140px;width:1872px;height:1px;background:#e2e2e2;"></div>
<div style="left:26px;top:161px;width:1872px;height:1px;background:#e2e2e2;"></div>
<div style="left:26px;top:181px;width:1872px;height:1px;background:#e2e2e2;"></div>
<div style="left:26px;top:201px;width:1872px;height:1px;background:#e2e2e2;"></div>
<div style="left:26px;top:221px;width:1872px;height:1px;background:#e2e2e2;"></div>
<div style="left:26px;top:241px;width:1872px;height:1px;background:#e2e2e2;"></div>
<div style="left:26px;top:261px;width:1872px;height:1px;background:#e2e2e2;"></div>
<div style="left:26px;top:281px;width:1872px;height:1px;background:#e2e2e2;"></div>
<div style="left:26px;top:301px;width:1872px;height:1px;background:#e2e2e2;"></div>
<div style="left:26px;top:321px;width:1872px;height:1px;background:#e2e2e2;"></div>
<div style="left:26px;top:341px;width:1872px;height:1px;background:#e2e2e2;"></div>
<div style="left:26px;top:361px;width:1872px;height:1px;background:#e2e2e2;"></div>
<div style="left:26px;top:382px;width:1872px;height:1px;background:#e2e2e2;"></div>
<div style="left:26px;top:403px;width:1872px;height:1px;background:#e2e2e2;"></div>
<div style="left:26px;top:423px;width:1872px;height:1px;background:#e2e2e2;"></div>
<div style="left:26px;top:443px;width:1872px;height:1px;background:#e2e2e2;"></div>
<div style="left:26px;top:463px;width:1872px;height:1px;background:#e2e2e2;"></div>
<div style="left:26px;top:483px;width:1872px;height:1px;background:#e2e2e2;"></div>
<div style="left:26px;top:503px;width:1872px;height:1px;background:#e2e2e2;"></div>
<div style="left:26px;top:523px;width:1872px;height:1px;background:#e2e2e2;"></div>
<div style="left:26px;top:543px;width:1872px;height:1px;background:#e2e2e2;"></div>
<div style="left:26px;top:563px;width:1872px;height:1px;background:#e2e2e2;"></div>
<div style="left:26px;top:583px;width:1872px;height:1px;background:#e2e2e2;"></div>
<div style="left:26px;top:603px;width:1872px;height:1px;background:#e2e2e2;"></div>
<div style="left:26px;top:623px;width:1872px;height:1px;background:#e2e2e2;"></div>
<div style="left:26px;top:643px;width:1872px;height:1px;background:#e2e2e2;"></div>
<div style="left:26px;top:663px;width:1872px;height:1px;background:#e2e2e2;"></div>
<div style="left:26px;top:683px;width:1872px;height:1px;background:#e2e2e2;"></div>
<div style="left:26px;top:703px;width:1872px;height:1px;background:#e2e2e2;"></div>
<div style="left:26px;top:723px;width:1872px;height:1px;background:#e2e2e2;"></div>
<div style="left:26px;top:743px;width:1872px;height:1px;background:#e2e2e2;"></div>
<div style="left:176px;top:383px;width:1722px;height:21px;background:#fff;"></div>
<div style="left:90px;top:80px;width:87px;height:20px;background:#fff;"></div>
<div style="left:729px;top:80px;width:64px;height:20px;background:#fff;;"></div>
<div style="left:1329px;top:80px;width:64px;height:20px;background:#fff;"></div>
<div style="left:176px;top:79px;width:183px;height:21px;background:#ed7d31;"></div>
<span class="t" style="left:158.5px;top:81px;line-height:20px;font-size:13.4px;color:#000;letter-spacing:-0.15px;transform:scaleX(0.9705);transform-origin:0 0;font-weight:700;">Saldo Awal :</span>
<span class="t" style="left:346.0px;top:81px;line-height:20px;font-size:13.4px;color:#000;">-</span>
<div style="left:176px;top:100px;width:553px;height:283px;background:#fff;"></div>
<div style="left:176px;top:100px;width:553px;height:41px;background:#5b9bd5;"></div>
<div style="left:176px;top:100px;width:553px;height:1px;background:#000;"></div>
<div style="left:240px;top:120px;width:489px;height:1px;background:#000;"></div>
<div style="left:176px;top:140px;width:553px;height:1px;background:#000;"></div>
<div style="left:176px;top:161px;width:553px;height:1px;background:#000;"></div>
<div style="left:176px;top:181px;width:553px;height:1px;background:#000;"></div>
<div style="left:176px;top:201px;width:553px;height:1px;background:#000;"></div>
<div style="left:176px;top:221px;width:553px;height:1px;background:#000;"></div>
<div style="left:176px;top:241px;width:553px;height:1px;background:#000;"></div>
<div style="left:176px;top:261px;width:553px;height:1px;background:#000;"></div>
<div style="left:176px;top:281px;width:553px;height:1px;background:#000;"></div>
<div style="left:176px;top:301px;width:553px;height:1px;background:#000;"></div>
<div style="left:176px;top:321px;width:553px;height:1px;background:#000;"></div>
<div style="left:176px;top:341px;width:553px;height:1px;background:#000;"></div>
<div style="left:176px;top:361px;width:553px;height:1px;background:#000;"></div>
<div style="left:176px;top:382px;width:553px;height:1px;background:#000;"></div>
<div style="left:176px;top:100px;width:1px;height:283px;background:#000;"></div>
<div style="left:240px;top:100px;width:1px;height:283px;background:#000;"></div>
<div style="left:358px;top:120px;width:1px;height:263px;background:#000;"></div>
<div style="left:484px;top:120px;width:1px;height:263px;background:#000;"></div>
<div style="left:610px;top:120px;width:1px;height:263px;background:#000;"></div>
<div style="left:728px;top:100px;width:1px;height:283px;background:#000;"></div>
<span class="t" style="left:191.8px;top:111px;line-height:20px;font-size:13.4px;color:#fff;letter-spacing:-0.15px;transform:scaleX(0.9421);transform-origin:0 0;font-weight:700;">Bulan</span>
<span class="t" style="left:436.5px;top:101px;line-height:20px;font-size:13.4px;color:#000;letter-spacing:-0.15px;transform:scaleX(0.9524);transform-origin:0 0;font-weight:700;">Rekening Koran</span>
<span class="t" style="left:266.2px;top:122px;line-height:20px;font-size:13.4px;color:#fff;letter-spacing:-0.15px;transform:scaleX(0.9726);transform-origin:0 0;font-weight:700;">Saldo Awal</span>
<span class="t" style="left:382.5px;top:122px;line-height:20px;font-size:13.4px;color:#000;letter-spacing:-0.06px;font-weight:700;">Mutasi Debit</span>
<span class="t" style="left:506.0px;top:122px;line-height:20px;font-size:13.4px;color:#000;letter-spacing:-0.07px;font-weight:700;">Mutasi Kredit</span>
<span class="t" style="left:635.0px;top:122px;line-height:20px;font-size:13.4px;color:#fff;letter-spacing:-0.15px;transform:scaleX(0.9659);transform-origin:0 0;font-weight:700;">Saldo Akhir</span>
<div style="left:177px;top:141px;width:63px;height:20px;overflow:hidden">
<span class="t" style="left:7.2px;top:1px;line-height:20px;font-size:13.4px;color:#000;letter-spacing:-0.15px;transform:scaleX(0.9472);transform-origin:0 0;font-weight:700;">Januari</span>
</div>
<span class="t" style="left:332.0px;top:142px;line-height:20px;font-size:13.4px;color:#000;">-</span>
<span class="t" style="left:458.0px;top:142px;line-height:20px;font-size:13.4px;color:#000;">-</span>
<span class="t" style="left:584.0px;top:142px;line-height:20px;font-size:13.4px;color:#000;">-</span>
<span class="t" style="left:702.0px;top:142px;line-height:20px;font-size:13.4px;color:#000;">-</span>
<div style="left:177px;top:162px;width:63px;height:19px;overflow:hidden">
<span class="t" style="left:7.2px;top:1px;line-height:20px;font-size:13.4px;color:#000;letter-spacing:-0.23px;font-weight:700;">Februari</span>
</div>
<span class="t" style="left:332.0px;top:163px;line-height:20px;font-size:13.4px;color:#000;">-</span>
<span class="t" style="left:458.0px;top:163px;line-height:20px;font-size:13.4px;color:#000;">-</span>
<span class="t" style="left:584.0px;top:163px;line-height:20px;font-size:13.4px;color:#000;">-</span>
<span class="t" style="left:702.0px;top:163px;line-height:20px;font-size:13.4px;color:#000;">-</span>
<div style="left:177px;top:182px;width:63px;height:19px;overflow:hidden">
<span class="t" style="left:7.2px;top:1px;line-height:20px;font-size:13.4px;color:#000;letter-spacing:0.44px;font-weight:700;">Maret</span>
</div>
<span class="t" style="left:332.0px;top:183px;line-height:20px;font-size:13.4px;color:#000;">-</span>
<span class="t" style="left:458.0px;top:183px;line-height:20px;font-size:13.4px;color:#000;">-</span>
<span class="t" style="left:584.0px;top:183px;line-height:20px;font-size:13.4px;color:#000;">-</span>
<span class="t" style="left:702.0px;top:183px;line-height:20px;font-size:13.4px;color:#000;">-</span>
<div style="left:177px;top:202px;width:63px;height:19px;overflow:hidden">
<span class="t" style="left:7.2px;top:1px;line-height:20px;font-size:13.4px;color:#000;letter-spacing:-0.33px;font-weight:700;">April</span>
</div>
<span class="t" style="left:332.0px;top:203px;line-height:20px;font-size:13.4px;color:#000;">-</span>
<span class="t" style="left:458.0px;top:203px;line-height:20px;font-size:13.4px;color:#000;">-</span>
<span class="t" style="left:584.0px;top:203px;line-height:20px;font-size:13.4px;color:#000;">-</span>
<span class="t" style="left:702.0px;top:203px;line-height:20px;font-size:13.4px;color:#000;">-</span>
<div style="left:177px;top:222px;width:63px;height:19px;overflow:hidden">
<span class="t" style="left:7.2px;top:1px;line-height:20px;font-size:13.4px;color:#000;letter-spacing:0.83px;font-weight:700;">Mei</span>
</div>
<span class="t" style="left:332.0px;top:223px;line-height:20px;font-size:13.4px;color:#000;">-</span>
<span class="t" style="left:458.0px;top:223px;line-height:20px;font-size:13.4px;color:#000;">-</span>
<span class="t" style="left:584.0px;top:223px;line-height:20px;font-size:13.4px;color:#000;">-</span>
<span class="t" style="left:702.0px;top:223px;line-height:20px;font-size:13.4px;color:#000;">-</span>
<div style="left:177px;top:242px;width:63px;height:19px;overflow:hidden">
<span class="t" style="left:7.2px;top:1px;line-height:20px;font-size:13.4px;color:#000;letter-spacing:-0.15px;transform:scaleX(0.8934);transform-origin:0 0;font-weight:700;">Juni</span>
</div>
<span class="t" style="left:332.0px;top:243px;line-height:20px;font-size:13.4px;color:#000;">-</span>
<span class="t" style="left:458.0px;top:243px;line-height:20px;font-size:13.4px;color:#000;">-</span>
<span class="t" style="left:584.0px;top:243px;line-height:20px;font-size:13.4px;color:#000;">-</span>
<span class="t" style="left:702.0px;top:243px;line-height:20px;font-size:13.4px;color:#000;">-</span>
<div style="left:177px;top:262px;width:63px;height:19px;overflow:hidden">
<span class="t" style="left:7.2px;top:1px;line-height:20px;font-size:13.4px;color:#000;letter-spacing:-0.15px;transform:scaleX(0.8926);transform-origin:0 0;font-weight:700;">Juli</span>
</div>
<span class="t" style="left:332.0px;top:263px;line-height:20px;font-size:13.4px;color:#000;">-</span>
<span class="t" style="left:458.0px;top:263px;line-height:20px;font-size:13.4px;color:#000;">-</span>
<span class="t" style="left:584.0px;top:263px;line-height:20px;font-size:13.4px;color:#000;">-</span>
<span class="t" style="left:702.0px;top:263px;line-height:20px;font-size:13.4px;color:#000;">-</span>
<div style="left:177px;top:282px;width:63px;height:19px;overflow:hidden">
<span class="t" style="left:7.2px;top:1px;line-height:20px;font-size:13.4px;color:#000;letter-spacing:-0.15px;transform:scaleX(0.9184);transform-origin:0 0;font-weight:700;">Agustus</span>
</div>
<span class="t" style="left:458.0px;top:283px;line-height:20px;font-size:13.4px;color:#000;">-</span>
<span class="t" style="left:584.0px;top:283px;line-height:20px;font-size:13.4px;color:#000;">-</span>
<span class="t" style="left:702.0px;top:283px;line-height:20px;font-size:13.4px;color:#000;">-</span>
<div style="left:177px;top:302px;width:63px;height:19px;overflow:hidden">
<span class="t" style="left:7.2px;top:1px;line-height:20px;font-size:13.4px;color:#000;letter-spacing:-0.22px;font-weight:700;">September</span>
</div>
<span class="t" style="left:287.1px;top:303px;line-height:20px;font-size:13.4px;color:#000;letter-spacing:-0.15px;transform:scaleX(0.9693);transform-origin:0 0;">945.000,00</span>
<span class="t" style="left:395.3px;top:303px;line-height:20px;font-size:13.4px;color:#000;letter-spacing:-0.15px;transform:scaleX(0.9709);transform-origin:0 0;">32.047.015,00</span>
<span class="t" style="left:521.3px;top:303px;line-height:20px;font-size:13.4px;color:#000;letter-spacing:-0.15px;transform:scaleX(0.9709);transform-origin:0 0;">29.769.710,00</span>
<span class="t" style="left:646.3px;top:303px;line-height:20px;font-size:13.4px;color:#000;letter-spacing:-0.15px;transform:scaleX(0.9719);transform-origin:0 0;">3.222.305,00</span>
<div style="left:177px;top:322px;width:63px;height:19px;overflow:hidden">
<span class="t" style="left:7.2px;top:1px;line-height:20px;font-size:13.4px;color:#000;letter-spacing:-0.16px;font-weight:700;">Oktober</span>
</div>
<span class="t" style="left:276.3px;top:323px;line-height:20px;font-size:13.4px;color:#000;letter-spacing:-0.15px;transform:scaleX(0.9719);transform-origin:0 0;">3.222.305,00</span>
<span class="t" style="left:395.3px;top:323px;line-height:20px;font-size:13.4px;color:#000;letter-spacing:-0.15px;transform:scaleX(0.9709);transform-origin:0 0;">21.673.000,00</span>
<span class="t" style="left:521.3px;top:323px;line-height:20px;font-size:13.4px;color:#000;letter-spacing:-0.15px;transform:scaleX(0.9709);transform-origin:0 0;">18.734.638,00</span>
<span class="t" style="left:646.3px;top:323px;line-height:20px;font-size:13.4px;color:#000;letter-spacing:-0.15px;transform:scaleX(0.9719);transform-origin:0 0;">6.160.667,00</span>
<div style="left:177px;top:342px;width:63px;height:19px;overflow:hidden">
<span class="t" style="left:7.2px;top:1px;line-height:20px;font-size:13.4px;color:#000;letter-spacing:0.01px;font-weight:700;">November</span>
</div>
<span class="t" style="left:276.3px;top:343px;line-height:20px;font-size:13.4px;color:#000;letter-spacing:-0.15px;transform:scaleX(0.9719);transform-origin:0 0;">6.160.667,00</span>
<span class="t" style="left:395.3px;top:343px;line-height:20px;font-size:13.4px;color:#000;letter-spacing:-0.15px;transform:scaleX(0.9709);transform-origin:0 0;">68.789.000,00</span>
<span class="t" style="left:521.3px;top:343px;line-height:20px;font-size:13.4px;color:#000;letter-spacing:-0.15px;transform:scaleX(0.9709);transform-origin:0 0;">69.362.155,00</span>
<span class="t" style="left:646.3px;top:343px;line-height:20px;font-size:13.4px;color:#000;letter-spacing:-0.15px;transform:scaleX(0.9719);transform-origin:0 0;">5.587.512,00</span>
<div style="left:177px;top:362px;width:63px;height:20px;overflow:hidden">
<span class="t" style="left:7.2px;top:1px;line-height:20px;font-size:13.4px;color:#000;letter-spacing:0.17px;font-weight:700;">Desember</span>
</div>
<span class="t" style="left:276.3px;top:363px;line-height:20px;font-size:13.4px;color:#000;letter-spacing:-0.15px;transform:scaleX(0.9719);transform-origin:0 0;">5.587.512,00</span>
<span class="t" style="left:395.3px;top:363px;line-height:20px;font-size:13.4px;color:#000;letter-spacing:-0.15px;transform:scaleX(0.9709);transform-origin:0 0;">57.578.000,00</span>
<span class="t" style="left:521.3px;top:363px;line-height:20px;font-size:13.4px;color:#000;letter-spacing:-0.15px;transform:scaleX(0.9709);transform-origin:0 0;">51.724.745,00</span>
<span class="t" style="left:639.4px;top:363px;line-height:20px;font-size:13.4px;color:#000;letter-spacing:-0.27px;">11.440.767,00</span>
<div style="left:358px;top:382px;width:1px;height:22px;background:#000;"></div>
<div style="left:484px;top:382px;width:1px;height:22px;background:#000;"></div>
<div style="left:610px;top:382px;width:1px;height:22px;background:#000;"></div>
<div style="left:358px;top:403px;width:253px;height:1px;background:#000;"></div>
<span class="t" style="left:387.4px;top:384px;line-height:20px;font-size:13.4px;color:#e6202d;letter-spacing:-0.29px;font-weight:700;">180.087.015,00</span>
<span class="t" style="left:513.4px;top:384px;line-height:20px;font-size:13.4px;color:#e6202d;letter-spacing:-0.29px;font-weight:700;">169.591.248,00</span>
<div style="left:792px;top:79px;width:183px;height:21px;background:#ed7d31;"></div>
<span class="t" style="left:774.5px;top:81px;line-height:20px;font-size:13.4px;color:#000;letter-spacing:-0.15px;transform:scaleX(0.9705);transform-origin:0 0;font-weight:700;">Saldo Awal :</span>
<span class="t" style="left:962.0px;top:81px;line-height:20px;font-size:13.4px;color:#000;">-</span>
<div style="left:792px;top:100px;width:537px;height:283px;background:#fff;"></div>
<div style="left:792px;top:100px;width:537px;height:41px;background:#5b9bd5;"></div>
<div style="left:792px;top:100px;width:537px;height:1px;background:#000;"></div>
<div style="left:856px;top:120px;width:473px;height:1px;background:#000;"></div>
<div style="left:792px;top:140px;width:537px;height:1px;background:#000;"></div>
<div style="left:792px;top:161px;width:537px;height:1px;background:#000;"></div>
<div style="left:792px;top:181px;width:537px;height:1px;background:#000;"></div>
<div style="left:792px;top:201px;width:537px;height:1px;background:#000;"></div>
<div style="left:792px;top:221px;width:537px;height:1px;background:#000;"></div>
<div style="left:792px;top:241px;width:537px;height:1px;background:#000;"></div>
<div style="left:792px;top:261px;width:537px;height:1px;background:#000;"></div>
<div style="left:792px;top:281px;width:537px;height:1px;background:#000;"></div>
<div style="left:792px;top:301px;width:537px;height:1px;background:#000;"></div>
<div style="left:792px;top:321px;width:537px;height:1px;background:#000;"></div>
<div style="left:792px;top:341px;width:537px;height:1px;background:#000;"></div>
<div style="left:792px;top:361px;width:537px;height:1px;background:#000;"></div>
<div style="left:792px;top:382px;width:537px;height:1px;background:#000;"></div>
<div style="left:792px;top:100px;width:1px;height:283px;background:#000;"></div>
<div style="left:856px;top:100px;width:1px;height:283px;background:#000;"></div>
<div style="left:974px;top:120px;width:1px;height:263px;background:#000;"></div>
<div style="left:1092px;top:120px;width:1px;height:263px;background:#000;"></div>
<div style="left:1210px;top:120px;width:1px;height:263px;background:#000;"></div>
<div style="left:1328px;top:100px;width:1px;height:283px;background:#000;"></div>
<span class="t" style="left:807.8px;top:111px;line-height:20px;font-size:13.4px;color:#fff;letter-spacing:-0.15px;transform:scaleX(0.9421);transform-origin:0 0;font-weight:700;">Bulan</span>
<span class="t" style="left:1065.5px;top:101px;line-height:20px;font-size:13.4px;color:#000;letter-spacing:-0.15px;transform:scaleX(0.9591);transform-origin:0 0;font-weight:700;">Accurate</span>
<span class="t" style="left:882.2px;top:122px;line-height:20px;font-size:13.4px;color:#fff;letter-spacing:-0.15px;transform:scaleX(0.9726);transform-origin:0 0;font-weight:700;">Saldo Awal</span>
<span class="t" style="left:994.5px;top:122px;line-height:20px;font-size:13.4px;color:#000;letter-spacing:-0.06px;font-weight:700;">Mutasi Debit</span>
<span class="t" style="left:1110.0px;top:122px;line-height:20px;font-size:13.4px;color:#000;letter-spacing:-0.07px;font-weight:700;">Mutasi Kredit</span>
<span class="t" style="left:1235.0px;top:122px;line-height:20px;font-size:13.4px;color:#fff;letter-spacing:-0.15px;transform:scaleX(0.9659);transform-origin:0 0;font-weight:700;">Saldo Akhir</span>
<div style="left:793px;top:141px;width:63px;height:20px;overflow:hidden">
<span class="t" style="left:7.2px;top:1px;line-height:20px;font-size:13.4px;color:#000;letter-spacing:-0.15px;transform:scaleX(0.9472);transform-origin:0 0;font-weight:700;">Januari</span>
</div>
<span class="t" style="left:948.0px;top:142px;line-height:20px;font-size:13.4px;color:#000;">-</span>
<span class="t" style="left:1066.0px;top:142px;line-height:20px;font-size:13.4px;color:#000;">-</span>
<span class="t" style="left:1184.0px;top:142px;line-height:20px;font-size:13.4px;color:#000;">-</span>
<span class="t" style="left:1302.0px;top:142px;line-height:20px;font-size:13.4px;color:#000;">-</span>
<div style="left:793px;top:162px;width:63px;height:19px;overflow:hidden">
<span class="t" style="left:7.2px;top:1px;line-height:20px;font-size:13.4px;color:#000;letter-spacing:-0.23px;font-weight:700;">Februari</span>
</div>
<span class="t" style="left:948.0px;top:163px;line-height:20px;font-size:13.4px;color:#000;">-</span>
<span class="t" style="left:1066.0px;top:163px;line-height:20px;font-size:13.4px;color:#000;">-</span>
<span class="t" style="left:1184.0px;top:163px;line-height:20px;font-size:13.4px;color:#000;">-</span>
<span class="t" style="left:1302.0px;top:163px;line-height:20px;font-size:13.4px;color:#000;">-</span>
<div style="left:793px;top:182px;width:63px;height:19px;overflow:hidden">
<span class="t" style="left:7.2px;top:1px;line-height:20px;font-size:13.4px;color:#000;letter-spacing:0.44px;font-weight:700;">Maret</span>
</div>
<span class="t" style="left:948.0px;top:183px;line-height:20px;font-size:13.4px;color:#000;">-</span>
<span class="t" style="left:1066.0px;top:183px;line-height:20px;font-size:13.4px;color:#000;">-</span>
<span class="t" style="left:1184.0px;top:183px;line-height:20px;font-size:13.4px;color:#000;">-</span>
<span class="t" style="left:1302.0px;top:183px;line-height:20px;font-size:13.4px;color:#000;">-</span>
<div style="left:793px;top:202px;width:63px;height:19px;overflow:hidden">
<span class="t" style="left:7.2px;top:1px;line-height:20px;font-size:13.4px;color:#000;letter-spacing:-0.33px;font-weight:700;">April</span>
</div>
<span class="t" style="left:948.0px;top:203px;line-height:20px;font-size:13.4px;color:#000;">-</span>
<span class="t" style="left:1066.0px;top:203px;line-height:20px;font-size:13.4px;color:#000;">-</span>
<span class="t" style="left:1184.0px;top:203px;line-height:20px;font-size:13.4px;color:#000;">-</span>
<span class="t" style="left:1302.0px;top:203px;line-height:20px;font-size:13.4px;color:#000;">-</span>
<div style="left:793px;top:222px;width:63px;height:19px;overflow:hidden">
<span class="t" style="left:7.2px;top:1px;line-height:20px;font-size:13.4px;color:#000;letter-spacing:0.83px;font-weight:700;">Mei</span>
</div>
<span class="t" style="left:948.0px;top:223px;line-height:20px;font-size:13.4px;color:#000;">-</span>
<span class="t" style="left:1066.0px;top:223px;line-height:20px;font-size:13.4px;color:#000;">-</span>
<span class="t" style="left:1184.0px;top:223px;line-height:20px;font-size:13.4px;color:#000;">-</span>
<span class="t" style="left:1302.0px;top:223px;line-height:20px;font-size:13.4px;color:#000;">-</span>
<div style="left:793px;top:242px;width:63px;height:19px;overflow:hidden">
<span class="t" style="left:7.2px;top:1px;line-height:20px;font-size:13.4px;color:#000;letter-spacing:-0.15px;transform:scaleX(0.8934);transform-origin:0 0;font-weight:700;">Juni</span>
</div>
<span class="t" style="left:948.0px;top:243px;line-height:20px;font-size:13.4px;color:#000;">-</span>
<span class="t" style="left:1066.0px;top:243px;line-height:20px;font-size:13.4px;color:#000;">-</span>
<span class="t" style="left:1184.0px;top:243px;line-height:20px;font-size:13.4px;color:#000;">-</span>
<span class="t" style="left:1302.0px;top:243px;line-height:20px;font-size:13.4px;color:#000;">-</span>
<div style="left:793px;top:262px;width:63px;height:19px;overflow:hidden">
<span class="t" style="left:7.2px;top:1px;line-height:20px;font-size:13.4px;color:#000;letter-spacing:-0.15px;transform:scaleX(0.8926);transform-origin:0 0;font-weight:700;">Juli</span>
</div>
<span class="t" style="left:948.0px;top:263px;line-height:20px;font-size:13.4px;color:#000;">-</span>
<span class="t" style="left:1066.0px;top:263px;line-height:20px;font-size:13.4px;color:#000;">-</span>
<span class="t" style="left:1184.0px;top:263px;line-height:20px;font-size:13.4px;color:#000;">-</span>
<span class="t" style="left:1302.0px;top:263px;line-height:20px;font-size:13.4px;color:#000;">-</span>
<div style="left:793px;top:282px;width:63px;height:19px;overflow:hidden">
<span class="t" style="left:7.2px;top:1px;line-height:20px;font-size:13.4px;color:#000;letter-spacing:-0.15px;transform:scaleX(0.9184);transform-origin:0 0;font-weight:700;">Agustus</span>
</div>
<span class="t" style="left:948.0px;top:283px;line-height:20px;font-size:13.4px;color:#000;">-</span>
<span class="t" style="left:1066.0px;top:283px;line-height:20px;font-size:13.4px;color:#000;">-</span>
<span class="t" style="left:1184.0px;top:283px;line-height:20px;font-size:13.4px;color:#000;">-</span>
<span class="t" style="left:1302.0px;top:283px;line-height:20px;font-size:13.4px;color:#000;">-</span>
<div style="left:793px;top:302px;width:63px;height:19px;overflow:hidden">
<span class="t" style="left:7.2px;top:1px;line-height:20px;font-size:13.4px;color:#000;letter-spacing:-0.22px;font-weight:700;">September</span>
</div>
<span class="t" style="left:903.1px;top:303px;line-height:20px;font-size:13.4px;color:#000;letter-spacing:-0.15px;transform:scaleX(0.9693);transform-origin:0 0;">945.000,00</span>
<span class="t" style="left:1003.3px;top:303px;line-height:20px;font-size:13.4px;color:#000;letter-spacing:-0.15px;transform:scaleX(0.9709);transform-origin:0 0;">32.047.015,00</span>
<span class="t" style="left:1121.3px;top:303px;line-height:20px;font-size:13.4px;color:#000;letter-spacing:-0.15px;transform:scaleX(0.9709);transform-origin:0 0;">29.769.710,00</span>
<span class="t" style="left:1246.3px;top:303px;line-height:20px;font-size:13.4px;color:#000;letter-spacing:-0.15px;transform:scaleX(0.9719);transform-origin:0 0;">3.222.305,00</span>
<div style="left:793px;top:322px;width:63px;height:19px;overflow:hidden">
<span class="t" style="left:7.2px;top:1px;line-height:20px;font-size:13.4px;color:#000;letter-spacing:-0.16px;font-weight:700;">Oktober</span>
</div>
<span class="t" style="left:892.3px;top:323px;line-height:20px;font-size:13.4px;color:#000;letter-spacing:-0.15px;transform:scaleX(0.9719);transform-origin:0 0;">3.222.305,00</span>
<span class="t" style="left:1003.3px;top:323px;line-height:20px;font-size:13.4px;color:#000;letter-spacing:-0.15px;transform:scaleX(0.9709);transform-origin:0 0;">21.673.000,00</span>
<span class="t" style="left:1121.3px;top:323px;line-height:20px;font-size:13.4px;color:#000;letter-spacing:-0.15px;transform:scaleX(0.9709);transform-origin:0 0;">18.734.638,00</span>
<span class="t" style="left:1246.3px;top:323px;line-height:20px;font-size:13.4px;color:#000;letter-spacing:-0.15px;transform:scaleX(0.9719);transform-origin:0 0;">6.160.667,00</span>
<div style="left:793px;top:342px;width:63px;height:19px;overflow:hidden">
<span class="t" style="left:7.2px;top:1px;line-height:20px;font-size:13.4px;color:#000;letter-spacing:0.01px;font-weight:700;">November</span>
</div>
<span class="t" style="left:892.3px;top:343px;line-height:20px;font-size:13.4px;color:#000;letter-spacing:-0.15px;transform:scaleX(0.9719);transform-origin:0 0;">6.160.667,00</span>
<span class="t" style="left:1003.3px;top:343px;line-height:20px;font-size:13.4px;color:#000;letter-spacing:-0.15px;transform:scaleX(0.9709);transform-origin:0 0;">68.789.000,00</span>
<span class="t" style="left:1121.3px;top:343px;line-height:20px;font-size:13.4px;color:#000;letter-spacing:-0.15px;transform:scaleX(0.9709);transform-origin:0 0;">69.362.155,00</span>
<span class="t" style="left:1246.3px;top:343px;line-height:20px;font-size:13.4px;color:#000;letter-spacing:-0.15px;transform:scaleX(0.9719);transform-origin:0 0;">5.587.512,00</span>
<div style="left:793px;top:362px;width:63px;height:20px;overflow:hidden">
<span class="t" style="left:7.2px;top:1px;line-height:20px;font-size:13.4px;color:#000;letter-spacing:0.17px;font-weight:700;">Desember</span>
</div>
<span class="t" style="left:892.3px;top:363px;line-height:20px;font-size:13.4px;color:#000;letter-spacing:-0.15px;transform:scaleX(0.9719);transform-origin:0 0;">5.587.512,00</span>
<span class="t" style="left:1066.0px;top:363px;line-height:20px;font-size:13.4px;color:#000;">-</span>
<span class="t" style="left:1184.0px;top:363px;line-height:20px;font-size:13.4px;color:#000;">-</span>
<span class="t" style="left:1246.3px;top:363px;line-height:20px;font-size:13.4px;color:#000;letter-spacing:-0.15px;transform:scaleX(0.9719);transform-origin:0 0;">5.587.512,00</span>
<div style="left:973px;top:382px;width:2px;height:22px;background:#000;"></div>
<div style="left:1091px;top:382px;width:2px;height:22px;background:#000;"></div>
<div style="left:973px;top:402px;width:237px;height:2px;background:#000;"></div>
<div style="left:973px;top:381px;width:237px;height:2px;background:#000;"></div>
<span class="t" style="left:995.4px;top:384px;line-height:20px;font-size:13.4px;color:#e6202d;letter-spacing:-0.29px;font-weight:700;">122.509.015,00</span>
<span class="t" style="left:1113.5px;top:384px;line-height:20px;font-size:13.4px;color:#e6202d;letter-spacing:-0.24px;font-weight:700;">117.866.503,00</span>
<div style="left:1392px;top:79px;width:183px;height:21px;background:#ed7d31;"></div>
<span class="t" style="left:1374.5px;top:81px;line-height:20px;font-size:13.4px;color:#000;letter-spacing:-0.15px;transform:scaleX(0.9705);transform-origin:0 0;font-weight:700;">Saldo Awal :</span>
<span class="t" style="left:1562.0px;top:81px;line-height:20px;font-size:13.4px;color:#000;">-</span>
<div style="left:1392px;top:100px;width:527px;height:283px;background:#fff;"></div>
<div style="left:1392px;top:100px;width:527px;height:41px;background:#5b9bd5;"></div>
<div style="left:1392px;top:100px;width:527px;height:1px;background:#000;"></div>
<div style="left:1456px;top:120px;width:463px;height:1px;background:#000;"></div>
<div style="left:1392px;top:140px;width:527px;height:1px;background:#000;"></div>
<div style="left:1392px;top:161px;width:527px;height:1px;background:#000;"></div>
<div style="left:1392px;top:181px;width:527px;height:1px;background:#000;"></div>
<div style="left:1392px;top:201px;width:527px;height:1px;background:#000;"></div>
<div style="left:1392px;top:221px;width:527px;height:1px;background:#000;"></div>
<div style="left:1392px;top:241px;width:527px;height:1px;background:#000;"></div>
<div style="left:1392px;top:261px;width:527px;height:1px;background:#000;"></div>
<div style="left:1392px;top:281px;width:527px;height:1px;background:#000;"></div>
<div style="left:1392px;top:301px;width:527px;height:1px;background:#000;"></div>
<div style="left:1392px;top:321px;width:527px;height:1px;background:#000;"></div>
<div style="left:1392px;top:341px;width:527px;height:1px;background:#000;"></div>
<div style="left:1392px;top:361px;width:527px;height:1px;background:#000;"></div>
<div style="left:1392px;top:382px;width:527px;height:1px;background:#000;"></div>
<div style="left:1392px;top:100px;width:1px;height:283px;background:#000;"></div>
<div style="left:1456px;top:100px;width:1px;height:283px;background:#000;"></div>
<div style="left:1574px;top:120px;width:1px;height:263px;background:#000;"></div>
<div style="left:1692px;top:120px;width:1px;height:263px;background:#000;"></div>
<div style="left:1810px;top:120px;width:1px;height:263px;background:#000;"></div>
<div style="left:1918px;top:100px;width:1px;height:283px;background:#000;"></div>
<span class="t" style="left:1407.8px;top:111px;line-height:20px;font-size:13.4px;color:#fff;letter-spacing:-0.15px;transform:scaleX(0.9421);transform-origin:0 0;font-weight:700;">Bulan</span>
<span class="t" style="left:1667.0px;top:101px;line-height:20px;font-size:13.4px;color:#000;letter-spacing:-0.15px;transform:scaleX(0.9689);transform-origin:0 0;font-weight:700;">Selisih</span>
<span class="t" style="left:1482.2px;top:122px;line-height:20px;font-size:13.4px;color:#fff;letter-spacing:-0.15px;transform:scaleX(0.9726);transform-origin:0 0;font-weight:700;">Saldo Awal</span>
<span class="t" style="left:1594.5px;top:122px;line-height:20px;font-size:13.4px;color:#000;letter-spacing:-0.06px;font-weight:700;">Mutasi Debit</span>
<span class="t" style="left:1710.0px;top:122px;line-height:20px;font-size:13.4px;color:#000;letter-spacing:-0.07px;font-weight:700;">Mutasi Kredit</span>
<span class="t" style="left:1830.0px;top:122px;line-height:20px;font-size:13.4px;color:#fff;letter-spacing:-0.15px;transform:scaleX(0.9659);transform-origin:0 0;font-weight:700;">Saldo Akhir</span>
<div style="left:1393px;top:141px;width:63px;height:20px;overflow:hidden">
<span class="t" style="left:7.2px;top:1px;line-height:20px;font-size:13.4px;color:#000;letter-spacing:-0.15px;transform:scaleX(0.9472);transform-origin:0 0;font-weight:700;">Januari</span>
</div>
<span class="t" style="left:1548.0px;top:142px;line-height:20px;font-size:13.4px;color:#000;">-</span>
<span class="t" style="left:1666.0px;top:142px;line-height:20px;font-size:13.4px;color:#000;">-</span>
<span class="t" style="left:1784.0px;top:142px;line-height:20px;font-size:13.4px;color:#000;">-</span>
<span class="t" style="left:1892.0px;top:142px;line-height:20px;font-size:13.4px;color:#000;">-</span>
<div style="left:1393px;top:162px;width:63px;height:19px;overflow:hidden">
<span class="t" style="left:7.2px;top:1px;line-height:20px;font-size:13.4px;color:#000;letter-spacing:-0.23px;font-weight:700;">Februari</span>
</div>
<span class="t" style="left:1548.0px;top:163px;line-height:20px;font-size:13.4px;color:#000;">-</span>
<span class="t" style="left:1666.0px;top:163px;line-height:20px;font-size:13.4px;color:#000;">-</span>
<span class="t" style="left:1784.0px;top:163px;line-height:20px;font-size:13.4px;color:#000;">-</span>
<span class="t" style="left:1892.0px;top:163px;line-height:20px;font-size:13.4px;color:#000;">-</span>
<div style="left:1393px;top:182px;width:63px;height:19px;overflow:hidden">
<span class="t" style="left:7.2px;top:1px;line-height:20px;font-size:13.4px;color:#000;letter-spacing:0.44px;font-weight:700;">Maret</span>
</div>
<span class="t" style="left:1548.0px;top:183px;line-height:20px;font-size:13.4px;color:#000;">-</span>
<span class="t" style="left:1666.0px;top:183px;line-height:20px;font-size:13.4px;color:#000;">-</span>
<span class="t" style="left:1784.0px;top:183px;line-height:20px;font-size:13.4px;color:#000;">-</span>
<span class="t" style="left:1892.0px;top:183px;line-height:20px;font-size:13.4px;color:#000;">-</span>
<div style="left:1393px;top:202px;width:63px;height:19px;overflow:hidden">
<span class="t" style="left:7.2px;top:1px;line-height:20px;font-size:13.4px;color:#000;letter-spacing:-0.33px;font-weight:700;">April</span>
</div>
<span class="t" style="left:1548.0px;top:203px;line-height:20px;font-size:13.4px;color:#000;">-</span>
<span class="t" style="left:1666.0px;top:203px;line-height:20px;font-size:13.4px;color:#000;">-</span>
<span class="t" style="left:1784.0px;top:203px;line-height:20px;font-size:13.4px;color:#000;">-</span>
<span class="t" style="left:1892.0px;top:203px;line-height:20px;font-size:13.4px;color:#000;">-</span>
<div style="left:1393px;top:222px;width:63px;height:19px;overflow:hidden">
<span class="t" style="left:7.2px;top:1px;line-height:20px;font-size:13.4px;color:#000;letter-spacing:0.83px;font-weight:700;">Mei</span>
</div>
<span class="t" style="left:1548.0px;top:223px;line-height:20px;font-size:13.4px;color:#000;">-</span>
<span class="t" style="left:1666.0px;top:223px;line-height:20px;font-size:13.4px;color:#000;">-</span>
<span class="t" style="left:1784.0px;top:223px;line-height:20px;font-size:13.4px;color:#000;">-</span>
<span class="t" style="left:1892.0px;top:223px;line-height:20px;font-size:13.4px;color:#000;">-</span>
<div style="left:1393px;top:242px;width:63px;height:19px;overflow:hidden">
<span class="t" style="left:7.2px;top:1px;line-height:20px;font-size:13.4px;color:#000;letter-spacing:-0.15px;transform:scaleX(0.8934);transform-origin:0 0;font-weight:700;">Juni</span>
</div>
<span class="t" style="left:1548.0px;top:243px;line-height:20px;font-size:13.4px;color:#000;">-</span>
<span class="t" style="left:1666.0px;top:243px;line-height:20px;font-size:13.4px;color:#000;">-</span>
<span class="t" style="left:1784.0px;top:243px;line-height:20px;font-size:13.4px;color:#000;">-</span>
<span class="t" style="left:1892.0px;top:243px;line-height:20px;font-size:13.4px;color:#000;">-</span>
<div style="left:1393px;top:262px;width:63px;height:19px;overflow:hidden">
<span class="t" style="left:7.2px;top:1px;line-height:20px;font-size:13.4px;color:#000;letter-spacing:-0.15px;transform:scaleX(0.8926);transform-origin:0 0;font-weight:700;">Juli</span>
</div>
<span class="t" style="left:1548.0px;top:263px;line-height:20px;font-size:13.4px;color:#000;">-</span>
<span class="t" style="left:1666.0px;top:263px;line-height:20px;font-size:13.4px;color:#000;">-</span>
<span class="t" style="left:1784.0px;top:263px;line-height:20px;font-size:13.4px;color:#000;">-</span>
<span class="t" style="left:1892.0px;top:263px;line-height:20px;font-size:13.4px;color:#000;">-</span>
<div style="left:1393px;top:282px;width:63px;height:19px;overflow:hidden">
<span class="t" style="left:7.2px;top:1px;line-height:20px;font-size:13.4px;color:#000;letter-spacing:-0.15px;transform:scaleX(0.9184);transform-origin:0 0;font-weight:700;">Agustus</span>
</div>
<span class="t" style="left:1548.0px;top:283px;line-height:20px;font-size:13.4px;color:#000;">-</span>
<span class="t" style="left:1666.0px;top:283px;line-height:20px;font-size:13.4px;color:#000;">-</span>
<span class="t" style="left:1784.0px;top:283px;line-height:20px;font-size:13.4px;color:#000;">-</span>
<span class="t" style="left:1892.0px;top:283px;line-height:20px;font-size:13.4px;color:#000;">-</span>
<div style="left:1393px;top:302px;width:63px;height:19px;overflow:hidden">
<span class="t" style="left:7.2px;top:1px;line-height:20px;font-size:13.4px;color:#000;letter-spacing:-0.22px;font-weight:700;">September</span>
</div>
<span class="t" style="left:1548.0px;top:303px;line-height:20px;font-size:13.4px;color:#000;">-</span>
<span class="t" style="left:1666.0px;top:303px;line-height:20px;font-size:13.4px;color:#000;">-</span>
<span class="t" style="left:1784.0px;top:303px;line-height:20px;font-size:13.4px;color:#000;">-</span>
<span class="t" style="left:1892.0px;top:303px;line-height:20px;font-size:13.4px;color:#000;">-</span>
<div style="left:1393px;top:322px;width:63px;height:19px;overflow:hidden">
<span class="t" style="left:7.2px;top:1px;line-height:20px;font-size:13.4px;color:#000;letter-spacing:-0.16px;font-weight:700;">Oktober</span>
</div>
<span class="t" style="left:1548.0px;top:323px;line-height:20px;font-size:13.4px;color:#000;">-</span>
<span class="t" style="left:1666.0px;top:323px;line-height:20px;font-size:13.4px;color:#000;">-</span>
<span class="t" style="left:1784.0px;top:323px;line-height:20px;font-size:13.4px;color:#000;">-</span>
<span class="t" style="left:1892.0px;top:323px;line-height:20px;font-size:13.4px;color:#000;">-</span>
<div style="left:1393px;top:342px;width:63px;height:19px;overflow:hidden">
<span class="t" style="left:7.2px;top:1px;line-height:20px;font-size:13.4px;color:#000;letter-spacing:0.01px;font-weight:700;">November</span>
</div>
<span class="t" style="left:1548.0px;top:343px;line-height:20px;font-size:13.4px;color:#000;">-</span>
<span class="t" style="left:1666.0px;top:343px;line-height:20px;font-size:13.4px;color:#000;">-</span>
<span class="t" style="left:1784.0px;top:343px;line-height:20px;font-size:13.4px;color:#000;">-</span>
<span class="t" style="left:1892.0px;top:343px;line-height:20px;font-size:13.4px;color:#000;">-</span>
<div style="left:1393px;top:362px;width:63px;height:20px;overflow:hidden">
<span class="t" style="left:7.2px;top:1px;line-height:20px;font-size:13.4px;color:#000;letter-spacing:0.17px;font-weight:700;">Desember</span>
</div>
<span class="t" style="left:1548.0px;top:363px;line-height:20px;font-size:13.4px;color:#000;">-</span>
<span class="t" style="left:1603.3px;top:363px;line-height:20px;font-size:13.4px;color:#000;letter-spacing:-0.15px;transform:scaleX(0.9709);transform-origin:0 0;">57.578.000,00</span>
<span class="t" style="left:1721.3px;top:363px;line-height:20px;font-size:13.4px;color:#000;letter-spacing:-0.15px;transform:scaleX(0.9709);transform-origin:0 0;">51.724.745,00</span>
<span class="t" style="left:1836.3px;top:363px;line-height:20px;font-size:13.4px;color:#000;letter-spacing:-0.15px;transform:scaleX(0.9719);transform-origin:0 0;">5.853.255,00</span>
<div style="left:1573px;top:382px;width:2px;height:22px;background:#000;"></div>
<div style="left:1691px;top:382px;width:2px;height:22px;background:#000;"></div>
<div style="left:1573px;top:402px;width:237px;height:2px;background:#000;"></div>
<div style="left:1573px;top:381px;width:237px;height:2px;background:#000;"></div>
<span class="t" style="left:1602.5px;top:384px;line-height:20px;font-size:13.4px;color:#e6202d;letter-spacing:-0.28px;font-weight:700;">57.578.000,00</span>
<span class="t" style="left:1720.5px;top:384px;line-height:20px;font-size:13.4px;color:#e6202d;letter-spacing:-0.28px;font-weight:700;">51.724.745,00</span>
<div style="left:26px;top:101px;width:150px;height:60px;background:#fff;"></div>
<div style="left:26px;top:99px;width:151px;height:2px;background:#000;"></div>
<div style="left:26px;top:160px;width:151px;height:2px;background:#000;"></div>
<div style="left:175px;top:99px;width:2px;height:63px;background:#000;"></div>
<div style="left:89px;top:101px;width:1px;height:60px;background:#000;"></div>
<div style="left:26px;top:120px;width:150px;height:1px;background:#000;"></div>
<div style="left:26px;top:140px;width:150px;height:1px;background:#000;"></div>
<span class="t" style="left:33.0px;top:102px;line-height:20px;font-size:13.4px;color:#000;letter-spacing:-0.15px;transform:scaleX(0.912);transform-origin:0 0;font-weight:700;">Bank</span>
<span class="t" style="left:33.0px;top:122px;line-height:20px;font-size:13.4px;color:#000;letter-spacing:-0.15px;transform:scaleX(0.9158);transform-origin:0 0;font-weight:700;">COA</span>
<span class="t" style="left:33.0px;top:142px;line-height:20px;font-size:13.4px;color:#000;letter-spacing:-0.15px;transform:scaleX(0.9682);transform-origin:0 0;font-weight:700;">No Rek</span>
<span class="t" style="left:97.5px;top:102px;line-height:20px;font-size:13.4px;color:#000;letter-spacing:-0.15px;transform:scaleX(0.8617);transform-origin:0 0;">BCA</span>
<span class="t" style="left:110.2px;top:122px;line-height:20px;font-size:13.4px;color:#2e75b6;letter-spacing:-0.15px;transform:scaleX(0.9571);transform-origin:0 0;font-weight:700;">1000.03</span>
<div style="left:855px;top:442px;width:121px;height:23px;border:2px solid #1d7044;"></div>
<div style="left:971px;top:460px;width:6px;height:6px;background:#1d7044;border:1px solid #fff;border-right:0;border-bottom:0;width:6px;height:6px;"></div>
<div style="left:0px;top:0px;width:1898px;height:20px;background:#0a0a0a;"></div>
<div style="left:26px;top:19px;width:1872px;height:1px;background:#8f8f8f;"></div>
<span class="t" style="left:53.0px;top:1px;line-height:20px;font-size:13.4px;color:#d6d6d6;">A</span>
<span class="t" style="left:128.5px;top:1px;line-height:20px;font-size:13.4px;color:#d6d6d6;">B</span>
<span class="t" style="left:203.7px;top:1px;line-height:20px;font-size:13.4px;color:#d6d6d6;">C</span>
<span class="t" style="left:294.7px;top:1px;line-height:20px;font-size:13.4px;color:#d6d6d6;">D</span>
<span class="t" style="left:417.0px;top:1px;line-height:20px;font-size:13.4px;color:#d6d6d6;">E</span>
<span class="t" style="left:543.4px;top:1px;line-height:20px;font-size:13.4px;color:#d6d6d6;">F</span>
<span class="t" style="left:664.3px;top:1px;line-height:20px;font-size:13.4px;color:#d6d6d6;">G</span>
<span class="t" style="left:755.7px;top:1px;line-height:20px;font-size:13.4px;color:#d6d6d6;">H</span>
<span class="t" style="left:822.6px;top:1px;line-height:20px;font-size:13.4px;color:#d6d6d6;">I</span>
<div style="left:857px;top:0px;width:117px;height:20px;background:#6b6b6b;"></div>
<div style="left:857px;top:18px;width:117px;height:2px;background:#1e8e54;"></div>
<span class="t" style="left:912.1px;top:1px;line-height:20px;font-size:13.4px;color:#d6d6d6;">J</span>
<span class="t" style="left:1029.0px;top:1px;line-height:20px;font-size:13.4px;color:#d6d6d6;">K</span>
<span class="t" style="left:1147.8px;top:1px;line-height:20px;font-size:13.4px;color:#d6d6d6;">L</span>
<span class="t" style="left:1263.9px;top:1px;line-height:20px;font-size:13.4px;color:#d6d6d6;">M</span>
<span class="t" style="left:1355.7px;top:1px;line-height:20px;font-size:13.4px;color:#d6d6d6;">N</span>
<span class="t" style="left:1419.3px;top:1px;line-height:20px;font-size:13.4px;color:#d6d6d6;">O</span>
<span class="t" style="left:1511.0px;top:1px;line-height:20px;font-size:13.4px;color:#d6d6d6;">P</span>
<span class="t" style="left:1628.3px;top:1px;line-height:20px;font-size:13.4px;color:#d6d6d6;">Q</span>
<span class="t" style="left:1746.7px;top:1px;line-height:20px;font-size:13.4px;color:#d6d6d6;">R</span>
<span class="t" style="left:1860.0px;top:1px;line-height:20px;font-size:13.4px;color:#d6d6d6;">S</span>
<div style="left:25px;top:0px;width:1px;height:20px;background:#626262;"></div>
<div style="left:89px;top:0px;width:1px;height:20px;background:#626262;"></div>
<div style="left:176px;top:0px;width:1px;height:20px;background:#626262;"></div>
<div style="left:240px;top:0px;width:1px;height:20px;background:#626262;"></div>
<div style="left:358px;top:0px;width:1px;height:20px;background:#626262;"></div>
<div style="left:484px;top:0px;width:1px;height:20px;background:#626262;"></div>
<div style="left:610px;top:0px;width:1px;height:20px;background:#626262;"></div>
<div style="left:728px;top:0px;width:1px;height:20px;background:#626262;"></div>
<div style="left:792px;top:0px;width:1px;height:20px;background:#626262;"></div>
<div style="left:856px;top:0px;width:1px;height:20px;background:#626262;"></div>
<div style="left:974px;top:0px;width:1px;height:20px;background:#626262;"></div>
<div style="left:1092px;top:0px;width:1px;height:20px;background:#626262;"></div>
<div style="left:1210px;top:0px;width:1px;height:20px;background:#626262;"></div>
<div style="left:1328px;top:0px;width:1px;height:20px;background:#626262;"></div>
<div style="left:1392px;top:0px;width:1px;height:20px;background:#626262;"></div>
<div style="left:1456px;top:0px;width:1px;height:20px;background:#626262;"></div>
<div style="left:1574px;top:0px;width:1px;height:20px;background:#626262;"></div>
<div style="left:1692px;top:0px;width:1px;height:20px;background:#626262;"></div>
<div style="left:1810px;top:0px;width:1px;height:20px;background:#626262;"></div>
<div style="left:0px;top:20px;width:26px;height:739px;background:#0a0a0a;"></div>
<div style="left:25px;top:20px;width:1px;height:739px;background:#666;"></div>
<span class="t" style="left:9.3px;top:21px;line-height:20px;font-size:13.4px;color:#d6d6d6;">1</span>
<div style="left:0px;top:39px;width:25px;height:1px;background:#3c3c3c;"></div>
<span class="t" style="left:9.3px;top:41px;line-height:20px;font-size:13.4px;color:#d6d6d6;">2</span>
<div style="left:0px;top:59px;width:25px;height:1px;background:#3c3c3c;"></div>
<span class="t" style="left:9.3px;top:61px;line-height:20px;font-size:13.4px;color:#d6d6d6;">3</span>
<div style="left:0px;top:79px;width:25px;height:1px;background:#3c3c3c;"></div>
<span class="t" style="left:9.3px;top:81px;line-height:20px;font-size:13.4px;color:#d6d6d6;">4</span>
<div style="left:0px;top:100px;width:25px;height:1px;background:#3c3c3c;"></div>
<span class="t" style="left:9.3px;top:102px;line-height:20px;font-size:13.4px;color:#d6d6d6;">5</span>
<div style="left:0px;top:120px;width:25px;height:1px;background:#3c3c3c;"></div>
<span class="t" style="left:9.3px;top:122px;line-height:20px;font-size:13.4px;color:#d6d6d6;">6</span>
<div style="left:0px;top:140px;width:25px;height:1px;background:#3c3c3c;"></div>
<span class="t" style="left:9.3px;top:142px;line-height:20px;font-size:13.4px;color:#d6d6d6;">7</span>
<div style="left:0px;top:161px;width:25px;height:1px;background:#3c3c3c;"></div>
<span class="t" style="left:9.3px;top:163px;line-height:20px;font-size:13.4px;color:#d6d6d6;">8</span>
<div style="left:0px;top:181px;width:25px;height:1px;background:#3c3c3c;"></div>
<span class="t" style="left:9.3px;top:183px;line-height:20px;font-size:13.4px;color:#d6d6d6;">9</span>
<div style="left:0px;top:201px;width:25px;height:1px;background:#3c3c3c;"></div>
<span class="t" style="left:5.7px;top:203px;line-height:20px;font-size:13.4px;color:#d6d6d6;letter-spacing:-0.31px;">10</span>
<div style="left:0px;top:221px;width:25px;height:1px;background:#3c3c3c;"></div>
<span class="t" style="left:5.7px;top:223px;line-height:20px;font-size:13.4px;color:#d6d6d6;letter-spacing:0.7px;">11</span>
<div style="left:0px;top:241px;width:25px;height:1px;background:#3c3c3c;"></div>
<span class="t" style="left:5.7px;top:243px;line-height:20px;font-size:13.4px;color:#d6d6d6;letter-spacing:-0.31px;">12</span>
<div style="left:0px;top:261px;width:25px;height:1px;background:#3c3c3c;"></div>
<span class="t" style="left:5.7px;top:263px;line-height:20px;font-size:13.4px;color:#d6d6d6;letter-spacing:-0.31px;">13</span>
<div style="left:0px;top:281px;width:25px;height:1px;background:#3c3c3c;"></div>
<span class="t" style="left:5.7px;top:283px;line-height:20px;font-size:13.4px;color:#d6d6d6;letter-spacing:-0.31px;">14</span>
<div style="left:0px;top:301px;width:25px;height:1px;background:#3c3c3c;"></div>
<span class="t" style="left:5.7px;top:303px;line-height:20px;font-size:13.4px;color:#d6d6d6;letter-spacing:-0.31px;">15</span>
<div style="left:0px;top:321px;width:25px;height:1px;background:#3c3c3c;"></div>
<span class="t" style="left:5.7px;top:323px;line-height:20px;font-size:13.4px;color:#d6d6d6;letter-spacing:-0.31px;">16</span>
<div style="left:0px;top:341px;width:25px;height:1px;background:#3c3c3c;"></div>
<span class="t" style="left:5.7px;top:343px;line-height:20px;font-size:13.4px;color:#d6d6d6;letter-spacing:-0.31px;">17</span>
<div style="left:0px;top:361px;width:25px;height:1px;background:#3c3c3c;"></div>
<span class="t" style="left:5.7px;top:363px;line-height:20px;font-size:13.4px;color:#d6d6d6;letter-spacing:-0.31px;">18</span>
<div style="left:0px;top:382px;width:25px;height:1px;background:#3c3c3c;"></div>
<span class="t" style="left:5.7px;top:384px;line-height:20px;font-size:13.4px;color:#d6d6d6;letter-spacing:-0.31px;">19</span>
<div style="left:0px;top:403px;width:25px;height:1px;background:#3c3c3c;"></div>
<span class="t" style="left:5.7px;top:405px;line-height:20px;font-size:13.4px;color:#d6d6d6;letter-spacing:-0.31px;">20</span>
<div style="left:0px;top:423px;width:25px;height:1px;background:#3c3c3c;"></div>
<span class="t" style="left:5.7px;top:425px;line-height:20px;font-size:13.4px;color:#d6d6d6;letter-spacing:-0.31px;">21</span>
<div style="left:0px;top:443px;width:25px;height:1px;background:#3c3c3c;"></div>
<div style="left:0px;top:444px;width:25px;height:19px;background:#666;"></div>
<div style="left:25px;top:444px;width:1px;height:19px;background:#2f8a5c;"></div>
<span class="t" style="left:5.7px;top:445px;line-height:20px;font-size:13.4px;color:#d6d6d6;letter-spacing:-0.31px;">22</span>
<div style="left:0px;top:463px;width:25px;height:1px;background:#3c3c3c;"></div>
<span class="t" style="left:5.7px;top:465px;line-height:20px;font-size:13.4px;color:#d6d6d6;letter-spacing:-0.31px;">23</span>
<div style="left:0px;top:483px;width:25px;height:1px;background:#3c3c3c;"></div>
<span class="t" style="left:5.7px;top:485px;line-height:20px;font-size:13.4px;color:#d6d6d6;letter-spacing:-0.31px;">24</span>
<div style="left:0px;top:503px;width:25px;height:1px;background:#3c3c3c;"></div>
<span class="t" style="left:5.7px;top:505px;line-height:20px;font-size:13.4px;color:#d6d6d6;letter-spacing:-0.31px;">25</span>
<div style="left:0px;top:523px;width:25px;height:1px;background:#3c3c3c;"></div>
<span class="t" style="left:5.7px;top:525px;line-height:20px;font-size:13.4px;color:#d6d6d6;letter-spacing:-0.31px;">26</span>
<div style="left:0px;top:543px;width:25px;height:1px;background:#3c3c3c;"></div>
<span class="t" style="left:5.7px;top:545px;line-height:20px;font-size:13.4px;color:#d6d6d6;letter-spacing:-0.31px;">27</span>
<div style="left:0px;top:563px;width:25px;height:1px;background:#3c3c3c;"></div>
<span class="t" style="left:5.7px;top:565px;line-height:20px;font-size:13.4px;color:#d6d6d6;letter-spacing:-0.31px;">28</span>
<div style="left:0px;top:583px;width:25px;height:1px;background:#3c3c3c;"></div>
<span class="t" style="left:5.7px;top:585px;line-height:20px;font-size:13.4px;color:#d6d6d6;letter-spacing:-0.31px;">29</span>
<div style="left:0px;top:603px;width:25px;height:1px;background:#3c3c3c;"></div>
<span class="t" style="left:5.7px;top:605px;line-height:20px;font-size:13.4px;color:#d6d6d6;letter-spacing:-0.31px;">30</span>
<div style="left:0px;top:623px;width:25px;height:1px;background:#3c3c3c;"></div>
<span class="t" style="left:5.7px;top:625px;line-height:20px;font-size:13.4px;color:#d6d6d6;letter-spacing:-0.31px;">31</span>
<div style="left:0px;top:643px;width:25px;height:1px;background:#3c3c3c;"></div>
<span class="t" style="left:5.7px;top:645px;line-height:20px;font-size:13.4px;color:#d6d6d6;letter-spacing:-0.31px;">32</span>
<div style="left:0px;top:663px;width:25px;height:1px;background:#3c3c3c;"></div>
<span class="t" style="left:5.7px;top:665px;line-height:20px;font-size:13.4px;color:#d6d6d6;letter-spacing:-0.31px;">33</span>
<div style="left:0px;top:683px;width:25px;height:1px;background:#3c3c3c;"></div>
<span class="t" style="left:5.7px;top:685px;line-height:20px;font-size:13.4px;color:#d6d6d6;letter-spacing:-0.31px;">34</span>
<div style="left:0px;top:703px;width:25px;height:1px;background:#3c3c3c;"></div>
<span class="t" style="left:5.7px;top:705px;line-height:20px;font-size:13.4px;color:#d6d6d6;letter-spacing:-0.31px;">35</span>
<div style="left:0px;top:723px;width:25px;height:1px;background:#3c3c3c;"></div>
<span class="t" style="left:5.7px;top:725px;line-height:20px;font-size:13.4px;color:#d6d6d6;letter-spacing:-0.31px;">36</span>
<div style="left:0px;top:743px;width:25px;height:1px;background:#3c3c3c;"></div>
<span class="t" style="left:5.7px;top:745px;line-height:20px;font-size:13.4px;color:#d6d6d6;letter-spacing:-0.31px;">37</span>
<div style="left:0px;top:763px;width:25px;height:1px;background:#3c3c3c;"></div>
<svg style="left:9px;top:6px" width="14" height="12" viewBox="0 0 14 12"><path d="M13 0V12H1Z" fill="#6e6e6e"/></svg>
</div>
<div style="left:1898px;top:219px;width:22px;height:759px;background:#111112;"></div>
<svg style="left:1904px;top:223px;" width="11" height="9" viewBox="0 0 11 9" fill="none"><path d="M5.5 1L10 7.6H1Z" fill="#a3a3a3"/></svg>
<div style="left:1905px;top:236px;width:9px;height:708px;background:#9d9d9d;border-radius:4.5px;"></div>
<svg style="left:1904px;top:968px;" width="11" height="9" viewBox="0 0 11 9" fill="none"><path d="M5.5 8L10 1.4H1Z" fill="#a3a3a3"/></svg>
<div style="left:0px;top:978px;width:1920px;height:32px;background:#0e1113;"></div>
<div style="left:0px;top:1009px;width:1920px;height:1px;background:#2c2c2c;"></div>
<div style="left:190px;top:978px;width:90px;height:6px;background:#fff;"></div>
<div style="left:170px;top:978px;width:27px;height:20px;background:#0e1113;border-radius:0 6px 0 0;"></div>
<div style="left:274px;top:978px;width:27px;height:20px;background:#0e1113;border-radius:6px 0 0 0;"></div>
<svg style="left:26px;top:986px;" width="10" height="14" viewBox="0 0 10 14" fill="none"><path d="M7.5 2L2.5 7l5 5" stroke="#c4c4c4" stroke-width="1.3" stroke-linecap="round" stroke-linejoin="round"/></svg>
<svg style="left:57px;top:986px;" width="10" height="14" viewBox="0 0 10 14" fill="none"><path d="M2.5 2l5 5-5 5" stroke="#c4c4c4" stroke-width="1.3" stroke-linecap="round" stroke-linejoin="round"/></svg>
<div style="left:90px;top:992px;width:2.6px;height:2.6px;background:#d8d8d8;border-radius:1.3px;"></div>
<div style="left:94.5px;top:992px;width:2.6px;height:2.6px;background:#d8d8d8;border-radius:1.3px;"></div>
<div style="left:99px;top:992px;width:2.6px;height:2.6px;background:#d8d8d8;border-radius:1.3px;"></div>
<span class="t" style="left:125.6px;top:984px;line-height:20px;font-size:14px;color:#f2f2f2;letter-spacing:-0.15px;transform:scaleX(0.9275);transform-origin:0 0;">Kas Kecil</span>
<div style="left:192px;top:985px;width:1px;height:17px;background:#6a6a6a;"></div>
<div style="left:197px;top:978px;width:77px;height:28px;background:#fff;border-radius:0 0 5px 5px;"></div>
<span class="t" style="left:205.6px;top:981px;line-height:20px;font-size:14px;color:#1c1c1c;letter-spacing:-0.15px;transform:scaleX(0.9481);transform-origin:0 0;text-shadow:0.3px 0 0 #1c1c1c;">Rekap RK</span>
<div style="left:205px;top:1001px;width:60px;height:2px;background:#217346;"></div>
<div style="left:277px;top:985px;width:1px;height:17px;background:#6a6a6a;"></div>
<div style="left:282px;top:982px;width:52px;height:24px;background:#0fb050;border-radius:4px;"></div>
<span class="t" style="left:291.8px;top:984px;line-height:20px;font-size:14px;color:#0a3f1f;letter-spacing:-0.15px;transform:scaleX(0.8935);transform-origin:0 0;">PP 23</span>
<div style="left:338px;top:985px;width:1px;height:17px;background:#6a6a6a;"></div>
<div style="left:343px;top:982px;width:44px;height:24px;background:#f80a0a;border-radius:4px;"></div>
<span class="t" style="left:351.9px;top:984px;line-height:20px;font-size:14px;color:#fff;letter-spacing:-0.15px;transform:scaleX(0.8787);transform-origin:0 0;">NRC</span>
<div style="left:391px;top:985px;width:1px;height:17px;background:#6a6a6a;"></div>
<div style="left:396px;top:982px;width:83px;height:24px;background:#f80a0a;border-radius:4px;"></div>
<span class="t" style="left:405.8px;top:984px;line-height:20px;font-size:14px;color:#fff;letter-spacing:-0.15px;transform:scaleX(0.9003);transform-origin:0 0;">RUGILABA</span>
<div style="left:483px;top:985px;width:1px;height:17px;background:#6a6a6a;"></div>
<span class="t" style="left:495.8px;top:984px;line-height:20px;font-size:14px;color:#f2f2f2;letter-spacing:-0.15px;transform:scaleX(0.863);transform-origin:0 0;">GL</span>
<div style="left:525px;top:985px;width:1px;height:17px;background:#6a6a6a;"></div>
<span class="t" style="left:539.0px;top:984px;line-height:20px;font-size:14px;color:#f2f2f2;letter-spacing:-0.15px;transform:scaleX(0.8571);transform-origin:0 0;">TB</span>
<div style="left:566px;top:985px;width:1px;height:17px;background:#6a6a6a;"></div>
<span class="t" style="left:580.2px;top:984px;line-height:20px;font-size:14px;color:#f2f2f2;letter-spacing:-0.15px;transform:scaleX(0.9685);transform-origin:0 0;">Neraca</span>
<div style="left:636px;top:985px;width:1px;height:17px;background:#6a6a6a;"></div>
<span class="t" style="left:650.2px;top:984px;line-height:20px;font-size:14px;color:#f2f2f2;letter-spacing:-0.15px;transform:scaleX(0.8345);transform-origin:0 0;">LR</span>
<div style="left:677px;top:985px;width:1px;height:17px;background:#6a6a6a;"></div>
<span class="t" style="left:692.2px;top:984px;line-height:20px;font-size:14px;color:#f2f2f2;letter-spacing:-0.09px;">summary tahunan</span>
<div style="left:817px;top:985px;width:1px;height:17px;background:#6a6a6a;"></div>
<svg style="left:859px;top:987px;" width="13" height="13" viewBox="0 0 13 13" fill="none"><path d="M6.5 1v11M1 6.5h11" stroke="#e0e0e0" stroke-width="1.2"/></svg>
<div style="left:1154px;top:989px;width:2px;height:2px;background:#d0d0d0;border-radius:1px;"></div>
<div style="left:1154px;top:993px;width:2px;height:2px;background:#d0d0d0;border-radius:1px;"></div>
<div style="left:1154px;top:997px;width:2px;height:2px;background:#d0d0d0;border-radius:1px;"></div>
<svg style="left:1175px;top:988px;" width="9" height="11" viewBox="0 0 9 11" fill="none"><path d="M1 5.5L8 1v9Z" fill="#a3a3a3"/></svg>
<div style="left:1188px;top:989px;width:659px;height:9px;background:#9d9d9d;border-radius:4.5px;"></div>
<svg style="left:1888px;top:988px;" width="9" height="11" viewBox="0 0 9 11" fill="none"><path d="M8 5.5L1 1v9Z" fill="#a3a3a3"/></svg>
<div style="left:0px;top:1010px;width:1920px;height:22px;background:#121212;"></div>
<span class="t" style="left:11.6px;top:1012px;line-height:20px;font-size:11.5px;color:#ededed;letter-spacing:-0.15px;transform:scaleX(0.9315);transform-origin:0 0;">Ready</span>
<svg style="left:61px;top:1012px;" width="16" height="18" viewBox="0 0 16 18" fill="none"><circle cx="6.5" cy="3.2" r="1.9" stroke="#eee" stroke-width="1"/>
<path d="M1 6.2c2 1 3.6 1.2 5.5 1.2s3.5-.2 5.5-1.2M6.5 7.4v3.4M6.5 10.8L3.4 16M6.5 10.8l1.6 2.6" stroke="#eee" stroke-width="1.1" stroke-linecap="round"/>
<path d="M10 11.6l4.6 4.6M14.6 11.6L10 16.2" stroke="#eee" stroke-width="1.1" stroke-linecap="round"/></svg>
<span class="t" style="left:80.6px;top:1011px;line-height:20px;font-size:11.5px;color:#f2f2f2;letter-spacing:-0.15px;transform:scaleX(0.9381);transform-origin:0 0;font-weight:700;">Accessibility: Investigate</span>
<div style="left:1620px;top:1010px;width:40px;height:22px;background:#262626;"></div>
<svg style="left:1632px;top:1013px;" width="16" height="16" viewBox="0 0 16 16" fill="none"><rect x="1.5" y="1.5" width="12.6" height="12.6" stroke="#eee" stroke-width="1.1"/><path d="M1.5 5.8h12.6M1.5 10h12.6M5.8 1.5v12.6M10 1.5v12.6" stroke="#eee" stroke-width="1.1"/></svg>
<svg style="left:1672px;top:1013px;" width="16" height="16" viewBox="0 0 16 16" fill="none"><rect x="1.5" y="1.5" width="13" height="12.6" stroke="#eee" stroke-width="1.1"/><rect x="4.4" y="4.4" width="7.2" height="6.8" stroke="#eee" stroke-width="1"/><path d="M6 6.6h4M6 8.8h4" stroke="#eee" stroke-width="1"/></svg>
<svg style="left:1712px;top:1013px;" width="16" height="16" viewBox="0 0 16 16" fill="none"><rect x="1.5" y="1.5" width="13" height="12.6" stroke="#eee" stroke-width="1.1"/><path d="M1.5 8.6h6.4V1.5M5 1.5v7.1" stroke="#eee" stroke-width="1.1"/></svg>
<div style="left:1746px;top:1020px;width:8px;height:1px;background:#e6e6e6;"></div>
<div style="left:1759px;top:1020px;width:100px;height:1px;background:#bdbdbd;"></div>
<div style="left:1807px;top:1016px;width:5px;height:11px;background:#bcbcbc;"></div>
<div style="left:1864px;top:1020px;width:8px;height:1px;background:#e6e6e6;"></div>
<div style="left:1867.5px;top:1016.5px;width:1px;height:8px;background:#e6e6e6;"></div>
<span class="t" style="left:1885.6px;top:1011px;line-height:20px;font-size:11.5px;color:#ededed;letter-spacing:-0.15px;transform:scaleX(0.8839);transform-origin:0 0;">100%</span>
<div style="left:0px;top:1032px;width:1920px;height:48px;background:linear-gradient(90deg,#1b2527 0,#1c2426 35%,#1d2325 60%,#1a2628 100%);"></div>
<div style="left:0px;top:1032px;width:1920px;height:1px;background:#3a4143;"></div>
<svg style="left:16px;top:1036px;" width="32" height="34" viewBox="0 0 32 34" fill="none">
<defs><linearGradient id="cl" x1="0" y1="0" x2="0" y2="1"><stop offset="0" stop-color="#dfe8f6"/><stop offset="1" stop-color="#a9c2e6"/></linearGradient></defs>
<path d="M8 30h15a5.2 5.2 0 0 0 1.2-10.2A7.4 7.4 0 0 0 10.2 18.6 5.8 5.8 0 0 0 8 30z" fill="url(#cl)"/>
<circle cx="22" cy="10" r="8" fill="#f4a4ae"/></svg>
<span class="t" style="left:34.7px;top:1036px;line-height:20px;font-size:12px;color:#7a0a14;">5</span>
<span class="t" style="left:50.6px;top:1038px;line-height:20px;font-size:11.5px;color:#fff;letter-spacing:-0.37px;">29°C</span>
<span class="t" style="left:50.8px;top:1054px;line-height:20px;font-size:11.5px;color:#c9c9c9;letter-spacing:-0.23px;">Berawan</span>
<svg style="left:572px;top:1044px;" width="25" height="25" viewBox="0 0 25 25" fill="none">
<defs><linearGradient id="wg" x1="0" y1="0" x2="1" y2="1"><stop offset="0" stop-color="#68d0fb"/><stop offset="1" stop-color="#1292ec"/></linearGradient></defs>
<path d="M1 1h11v11H1zM13 1h11v11H13zM1 13h11v11H1zM13 13h11v11H13z" fill="url(#wg)"/></svg>
<div style="left:609px;top:1040px;width:220px;height:32px;background:#3c4245;border-radius:16px;border-top:1px solid #575c5f;"></div>
<svg style="left:619px;top:1047px;" width="18" height="18" viewBox="0 0 18 18" fill="none"><circle cx="8" cy="8" r="5.4" stroke="#e4e4e4" stroke-width="1.5"/><path d="M12 12.2l3.6 3.6" stroke="#e4e4e4" stroke-width="1.7" stroke-linecap="round"/></svg>
<span class="t" style="left:646.6px;top:1046px;line-height:20px;font-size:14px;color:#d2d2d2;letter-spacing:-0.15px;transform:scaleX(0.9267);transform-origin:0 0;">Search</span>
<svg style="left:778px;top:1040px;" width="48" height="31" viewBox="0 0 48 31" fill="none">
<ellipse cx="24" cy="25.8" rx="21" ry="3.4" fill="#e6d3a6"/>
<path d="M11 6.4c-1.8 1.2-3.4 3.4-4 5.6l1.6 1.2 3.6-2 1.4 2.6c2 1.2 2.4 2.6 2.6 5.4l.6 6h1.6l.4-5.4h8l1.2 5.4h1.6l.4-6.4c1.6-1.6 2-4 1.2-6.2-.8-2-2.6-2.8-5-2.8h-8.2c-1.4 0-2.4-.8-3.2-2.2l-1-2.8z" fill="#a79bc4"/>
<path d="M13.4 8.4l1.6 4M16.4 9.6l.6 5.2M19.4 9.8v6M22.4 9.8v6M25.4 9.8l.4 6M28.2 10.4l1 5" stroke="#f3f0fa" stroke-width="1.2"/>
<path d="M10.4 4.6l2.4 4 1.6-.6z" fill="#5d5478"/><path d="M31.4 12.4c1.4 1.4 1.6 4 .6 6.4" stroke="#5d5478" stroke-width="1.2"/></svg>
<svg style="left:840px;top:1044px;" width="26" height="24" viewBox="0 0 26 24" fill="none"><rect x="1" y="7.4" width="17.4" height="15" rx="2" fill="#5f6467"/><rect x="7.4" y="1.2" width="17.6" height="15.2" rx="2" fill="#e9e9e9"/><rect x="7.4" y="7.4" width="11" height="9" fill="#bdbdbd"/></svg>
<svg style="left:884px;top:1044px;" width="26" height="25" viewBox="0 0 26 25" fill="none">
<path d="M1 3.4a1.6 1.6 0 0 1 1.6-1.6h6.6l2.2 2.6h11.2a1.6 1.6 0 0 1 1.6 1.6v3H1z" fill="#e5a41c"/>
<rect x="1" y="6.4" width="23.4" height="16.6" rx="1.6" fill="#f9cf52"/>
<path d="M6 23v-5.4a1.6 1.6 0 0 1 1.6-1.6h10a1.6 1.6 0 0 1 1.6 1.6V23z" fill="#2a86d6"/><rect x="9.4" y="18.4" width="6.6" height="1.3" fill="#1a5fa8"/></svg>
<div style="left:894px;top:1072px;width:6px;height:3px;background:#8e8e8e;border-radius:1.5px;"></div>
<svg style="left:928px;top:1043px;" width="26" height="26" viewBox="0 0 26 26" fill="none">
<defs><linearGradient id="eg" x1="0" y1="0" x2="1" y2="0.4"><stop offset="0" stop-color="#2aa3e6"/><stop offset="0.55" stop-color="#35c1c7"/><stop offset="1" stop-color="#6ad860"/></linearGradient></defs>
<circle cx="13" cy="13" r="12.2" fill="#1467c2"/>
<path d="M1 12.6C1.6 5.8 7 .8 13.4.8c6.4 0 11.8 4.6 11.6 10.6-.2 3.4-2.8 5.4-5.6 5.4-2.2 0-3.6-1-3.8-2.4.8-1.4.6-3.6-1.4-4.8-3-1.8-7.800-.6-9.800 2.400-.8 1.200-1.200 2.400-1.400 3.800z" fill="url(#eg)"/>
<path d="M5.6 15.400c-.600 4.800 3.200 9.400 8.800 9.800 3.600.2 6.800-1.400 8.800-4-3 1.600-6.800 1.400-9.400-.8-1.800-1.600-2.400-4-1.400-6.200-2.200-1.400-5.600-1-6.800 1.200z" fill="#0d4fa3"/></svg>
<svg style="left:972px;top:1043px;" width="25" height="26" viewBox="0 0 25 26" fill="none">
<path d="M8 7V4.600A2.600 2.600 0 0 1 10.600 2h3.800A2.600 2.600 0 0 1 17 4.600V7" stroke="#3aa0e8" stroke-width="1.6"/>
<path d="M1 7h23v15a3 3 0 0 1-3 3H4a3 3 0 0 1-3-3z" fill="#f1f1f1"/>
<rect x="7.600" y="10.600" width="4.400" height="4.400" fill="#f25022"/><rect x="13" y="10.600" width="4.400" height="4.400" fill="#7fba00"/>
<rect x="7.600" y="16" width="4.400" height="4.400" fill="#00a4ef"/><rect x="13" y="16" width="4.400" height="4.400" fill="#ffb900"/></svg>
<svg style="left:1016px;top:1043px;" width="26" height="26" viewBox="0 0 26 26" fill="none">
<path d="M13 1.600a11 11 0 0 0-9.400 16.800L2 24.400l6.200-1.600A11 11 0 1 0 13 1.600z" fill="#153b26" stroke="#2bd46a" stroke-width="2"/>
<path d="M9.400 7.800c-.600.400-1.400 1.400-1.200 2.800.4 2.400 3 5.800 6.600 6.800 1.400.4 2.600-.4 3-1.200.3-.6.200-1-.1-1.200l-2-1c-.4-.2-.7-.1-.9.200l-.7.900c-1.600-.6-3-2-3.600-3.400l.8-.8c.2-.3.300-.6.100-1l-.900-1.900c-.2-.400-.7-.500-1.100-.200z" fill="#2bd46a"/></svg>
<div style="left:1026px;top:1072px;width:6px;height:3px;background:#8e8e8e;border-radius:1.5px;"></div>
<svg style="left:1060px;top:1041px;" width="30" height="28" viewBox="0 0 30 28" fill="none">
<circle cx="13" cy="15" r="12" fill="#fff"/>
<path d="M13 3a12 12 0 0 1 10.400 6H13a6 6 0 0 0-5.600 3.800L3.200 8A12 12 0 0 1 13 3z" fill="#e43b2c"/>
<path d="M23.400 9A12 12 0 0 1 12.200 27l5.600-9.400A6 6 0 0 0 18 11.600L17 9z" fill="#f7c02d"/>
<path d="M12.200 27A12 12 0 0 1 3.200 8l5 8.600a6 6 0 0 0 7 3z" fill="#2ba24c"/>
<circle cx="13" cy="15" r="5.400" fill="#fff"/><circle cx="13" cy="15" r="4.200" fill="#3f7fe8"/>
<circle cx="22" cy="6.400" r="6.600" fill="#7d4b3c"/></svg>
<span class="t" style="left:1079.5px;top:1038px;line-height:20px;font-size:10px;color:#fff;">k</span>
<div style="left:1070px;top:1072px;width:6px;height:3px;background:#8e8e8e;border-radius:1.5px;"></div>
<svg style="left:1104px;top:1043px;" width="26" height="26" viewBox="0 0 26 26" fill="none">
<rect x="1" y="2" width="18" height="17" rx="2" fill="#f3f3f3"/>
<path d="M3.600 4.600h2.600v2.600H3.600zM7.600 4.600h2.600v2.600H7.600zM11.600 4.600h2.600v2.600h-2.600zM3.600 8.600h2.600v2.600H3.600zM3.600 12.600h2.600v2.600H3.600z" fill="#d24726"/>
<rect x="7.600" y="8.600" width="6.600" height="6.600" fill="#bfe3f7"/>
<path d="M14 8l6.600 13M6.600 17.400h12" stroke="#9aa4ad" stroke-width="1.800"/>
<circle cx="22" cy="15.400" r="2.200" stroke="#2b8fe0" stroke-width="1.500"/><circle cx="15.400" cy="23" r="2.200" stroke="#2b8fe0" stroke-width="1.500"/></svg>
<svg style="left:1151px;top:1043px;" width="20" height="26" viewBox="0 0 20 26" fill="none">
<rect x="1" y="1" width="18" height="24" rx="2" fill="#8a9099"/>
<rect x="2.600" y="3" width="14.800" height="4.600" fill="#38c6f2"/>
<path d="M3 10h3.800v3.800H3zM8.200 10H12v3.800H8.200zM13.400 10h3.800v3.800h-3.800zM3 15h3.800v3.800H3zM8.200 15H12v3.800H8.200zM3 20h3.800v3.800H3zM8.200 20H12v3.800H8.200z" fill="#e4e6ea"/>
<path d="M13.400 15h3.800v8.800h-3.800z" fill="#1f4d8f"/></svg>
<svg style="left:1195px;top:1043px;" width="21" height="26" viewBox="0 0 21 26" fill="none">
<rect x="1" y="2.400" width="19" height="22" rx="1.600" fill="#47c4f3"/>
<rect x="1" y="1" width="19" height="3" fill="#f2f2f2"/>
<path d="M3 1.200v2.400M5.600 1.200v2.400M8.200 1.200v2.400M10.800 1.200v2.400M13.400 1.200v2.400M16 1.200v2.400M18.400 1.200v2.400" stroke="#3a7da8" stroke-width="0.800"/>
<path d="M4 8.600h13M4 12.600h13M4 16.600h13" stroke="#14709e" stroke-width="2"/>
<rect x="1" y="21.400" width="19" height="1.600" fill="#f3f3f3"/><rect x="1" y="23" width="19" height="1.600" fill="#e0742a"/></svg>
<svg style="left:1236px;top:1043px;" width="26" height="26" viewBox="0 0 26 26" fill="none"><circle cx="13.400" cy="12.800" r="12.200" fill="#e8384f"/><circle cx="13.400" cy="12.800" r="11.400" stroke="#f06a7c" stroke-width="1"/><path d="M8.600 19.400L13.400 6.600l4.800 12.800" stroke="#fff" stroke-width="2.600" stroke-linejoin="miter"/></svg>
<div style="left:1246px;top:1072px;width:6px;height:3px;background:#8e8e8e;border-radius:1.5px;"></div>
<div style="left:1274px;top:1036px;width:38px;height:44px;background:#29343780;border:1px solid #3a4548;border-bottom:0;border-radius:4px 4px 0 0;"></div>
<svg style="left:1280px;top:1044px;" width="24" height="24" viewBox="0 0 24 24" fill="none">
<rect x="5" y="1" width="17" height="22" rx="2.400" fill="#1d8f3f"/>
<rect x="5" y="1" width="17" height="7.600" rx="2.400" fill="#7fd34a"/>
<rect x="5" y="5" width="17" height="4.600" fill="#5cc03e"/>
<path d="M13.600 1.400v7.800" stroke="#4aa636" stroke-width="1"/>
<rect x="14" y="9.600" width="8" height="13.400" fill="#187a35"/>
<rect x="0.600" y="9" width="11.600" height="11.600" rx="2" fill="#16793a"/>
<path d="M3.800 11.800l5.200 6M9 11.800l-5.200 6" stroke="#fff" stroke-width="1.700"/></svg>
<div style="left:1285px;top:1072px;width:16px;height:3px;background:#4cb3f2;border-radius:1.5px;"></div>
<svg style="left:1324px;top:1046px;" width="26" height="20" viewBox="0 0 26 20" fill="none">
<rect x="1" y="1" width="24" height="18" rx="1.600" fill="#3b3b3b"/>
<rect x="1" y="1" width="24" height="3.200" fill="#9a9a9a"/>
<path d="M4.600 7.400l4.600 3.600-4.600 3.600" stroke="#fff" stroke-width="1.800"/><path d="M12.400 15.600h6.400" stroke="#fff" stroke-width="1.800"/></svg>
<div style="left:1334px;top:1072px;width:6px;height:3px;background:#8e8e8e;border-radius:1.5px;"></div>
<svg style="left:1695px;top:1050px;" width="14" height="12" viewBox="0 0 14 12" fill="none"><path d="M2 9l5-5 5 5" stroke="#fff" stroke-width="1.600" stroke-linecap="round" stroke-linejoin="round"/></svg>
<svg style="left:1724px;top:1047px;" width="20" height="18" viewBox="0 0 20 18" fill="none"><path d="M5.600 14.400h9a3.400 3.400 0 0 0 .6-6.750A4.600 4.600 0 0 0 6.400 7.400 3.600 3.600 0 0 0 5.600 14.400z" fill="#8c8c8c"/><path d="M3.400 2l13.600 14.400" stroke="#e8e8e8" stroke-width="1.300"/></svg>
<svg style="left:1757px;top:1047px;" width="19" height="18" viewBox="0 0 19 18" fill="none"><rect x="1.400" y="1.600" width="11" height="9.600" rx="1" stroke="#fff" stroke-width="1.200"/><path d="M4.400 16.400h6.400M7.400 11.400v5M15.200 8.400v8" stroke="#fff" stroke-width="1.200"/><rect x="13.400" y="1.600" width="3.600" height="5.600" rx="0.800" stroke="#fff" stroke-width="1.200"/></svg>
<svg style="left:1781px;top:1048px;" width="19" height="16" viewBox="0 0 19 16" fill="none"><path d="M1.400 5.600h3l3.400-3.200v11.200L4.400 10.400h-3z" stroke="#fff" stroke-width="1.200" stroke-linejoin="round"/><path d="M10.400 5.400a3.600 3.600 0 0 1 0 5.200M12.600 3.400a6.400 6.400 0 0 1 0 9.200M14.800 1.600a9 9 0 0 1 0 12.800" stroke="#fff" stroke-width="1.200" stroke-linecap="round"/></svg>
<span class="t" style="left:1849.0px;top:1038px;line-height:20px;font-size:11.5px;color:#fff;letter-spacing:-0.19px;">13:40</span>
<span class="t" style="left:1816.0px;top:1054px;line-height:20px;font-size:11.5px;color:#fff;letter-spacing:0.38px;">31/01/2026</span>
<svg style="left:1884px;top:1047px;" width="17" height="18" viewBox="0 0 17 18" fill="none"><path d="M2.600 13h10.800c-1.200-1.200-1.600-2.400-1.600-4.600 0-3-1.600-5-3.800-5s-3.800 2-3.800 5c0 2.200-.400 3.400-1.600 4.600z" fill="#fff"/><path d="M6.400 14.600a1.700 1.700 0 0 0 3.200 0z" fill="#fff"/><path d="M11.600 2h3.400l-3.400 4h3.400" stroke="#fff" stroke-width="1.100"/><path d="M6.800 7h2.400L6.800 9.800h2.400" stroke="#1b2527" stroke-width="0.900"/></svg>
</body></html>
